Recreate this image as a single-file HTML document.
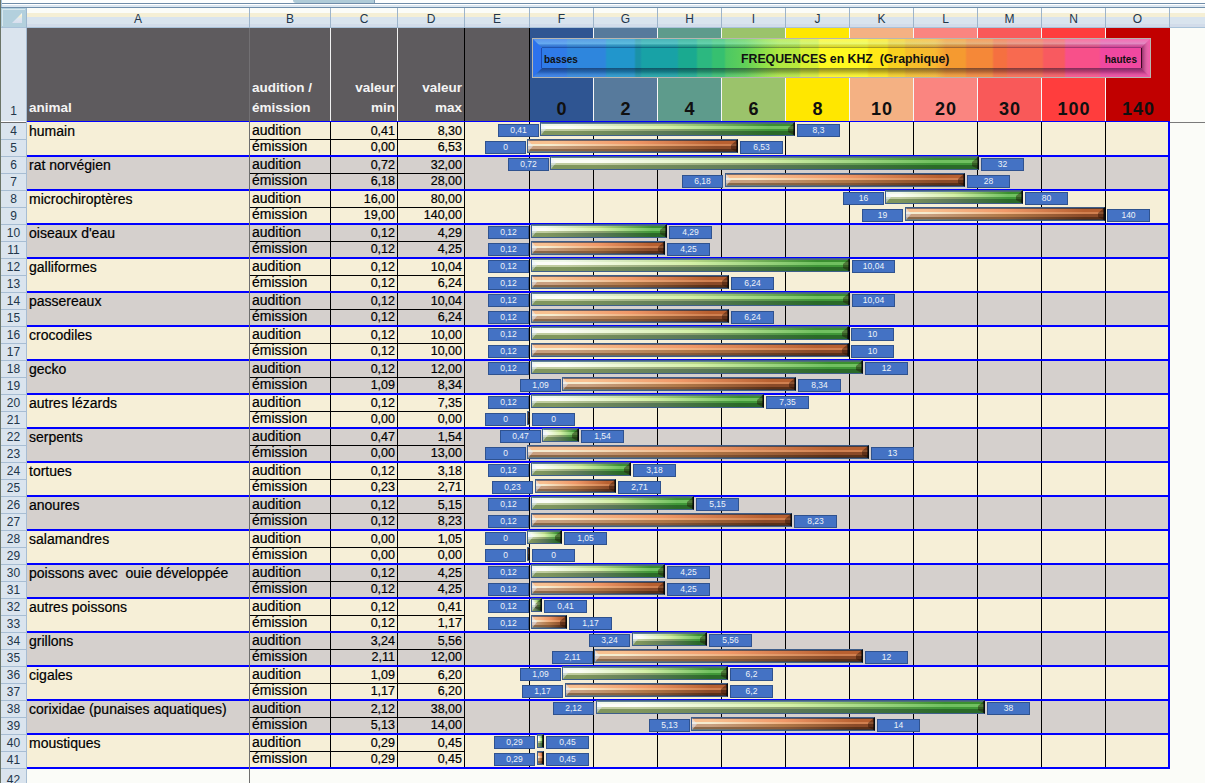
<!DOCTYPE html>
<html><head><meta charset="utf-8"><style>
html,body{margin:0;padding:0}
body{width:1205px;height:783px;overflow:hidden;position:relative;background:#fbfcf8;font-family:"Liberation Sans",sans-serif}
div{position:absolute;box-sizing:border-box}
.ch{font-size:12px;color:#22364a;text-align:center;line-height:19px;padding-top:2px}
.rh{font-size:12px;color:#22364a;text-align:center;line-height:16px}
.fn{font-size:18px;font-weight:bold;color:#101010;text-align:center;line-height:22px;letter-spacing:1px;text-indent:1px}
.hd{font-size:13.5px;font-weight:bold;color:#f4f4f4;line-height:18px;white-space:nowrap}
.bn{font-size:10px;font-weight:bold;color:#101010;line-height:14px;white-space:nowrap}
.tx{font-size:14px;color:#000;-webkit-text-stroke:0.2px #000;line-height:17px;white-space:nowrap}
.nm{font-size:12.5px;color:#000;-webkit-text-stroke:0.2px #000;line-height:17px;white-space:nowrap;text-align:right}
.lb{background:#4472c4;border:1px solid #2f528f;color:#eef2f8;font-size:8.5px;text-align:center;line-height:11px}
.bar{border:1px solid #3e5e8a;border-right-color:#050a10;overflow:hidden}
.au{background:linear-gradient(180deg,rgba(255,255,255,.55) 0%,rgba(255,255,255,.25) 35%,rgba(0,0,0,0) 55%,rgba(0,0,0,.25) 100%),linear-gradient(90deg,#f6f8ee 0%,#b8d8a0 45%,#3f9a3f 85%,#2a7a2a 100%)}
.em{background:linear-gradient(180deg,rgba(255,255,255,.35) 0%,rgba(255,255,255,.3) 40%,rgba(0,0,0,0) 55%,rgba(0,0,0,.35) 100%),linear-gradient(90deg,#f3d8b8 0%,#e0a070 50%,#c06a3a 85%,#8a4520 100%)}
</style></head><body>
<div style="left:0px;top:0px;width:1205px;height:3px;background:#fdfefe"></div>
<div style="left:293px;top:0px;width:82px;height:3px;background:#afcbd8;border-right:1px solid #7f9cb5;border-radius:0 0 0 4px"></div>
<div style="left:0px;top:3px;width:1205px;height:1px;background:#6f8ca8"></div>
<div style="left:0px;top:4px;width:1205px;height:1px;background:#ffffff"></div>
<div style="left:0px;top:5px;width:1205px;height:2px;background:#dbe6f0"></div>
<div style="left:0px;top:7px;width:1205px;height:1px;background:#6f8eab"></div>
<div style="left:1px;top:0px;width:1px;height:7px;background:#a8c4dc"></div>
<div style="left:1px;top:8px;width:1204px;height:5px;background:#fbfcf8"></div>
<div style="left:1px;top:13px;width:1204px;height:4px;background:#f5efd5"></div>
<div style="left:1px;top:17px;width:1204px;height:7px;background:#d9e4ee"></div>
<div style="left:1px;top:24px;width:1204px;height:3px;background:#d2dcea"></div>
<div style="left:1px;top:27px;width:1204px;height:1px;background:#a9c2d9"></div>
<div style="left:1px;top:8px;width:25px;height:19px;background:#b3d0dd"></div>
<svg style="position:absolute;left:12px;top:13px" width="11" height="11"><defs><linearGradient id="tri" x1="0" y1="0" x2="0" y2="1"><stop offset="0" stop-color="#ffffff"/><stop offset="0.3" stop-color="#f5efd0"/><stop offset="0.55" stop-color="#dfe8f0"/><stop offset="1" stop-color="#d8deee"/></linearGradient></defs><polygon points="10,0 10,10 0,10" fill="url(#tri)"/></svg>
<div style="left:2px;top:9px;width:23px;height:1px;background:#d8e8ef"></div>
<div style="left:2px;top:9px;width:1px;height:17px;background:#d8e8ef"></div>
<div style="left:26px;top:8px;width:1px;height:20px;background:#9db8cf"></div>
<div style="left:249px;top:8px;width:1px;height:20px;background:#9db4ca"></div>
<div class="ch" style="left:27px;top:8px;width:222px;height:19px;">A</div>
<div style="left:330px;top:8px;width:1px;height:20px;background:#9db4ca"></div>
<div class="ch" style="left:250px;top:8px;width:80px;height:19px;">B</div>
<div style="left:397px;top:8px;width:1px;height:20px;background:#9db4ca"></div>
<div class="ch" style="left:331px;top:8px;width:66px;height:19px;">C</div>
<div style="left:464px;top:8px;width:1px;height:20px;background:#9db4ca"></div>
<div class="ch" style="left:398px;top:8px;width:66px;height:19px;">D</div>
<div style="left:529px;top:8px;width:1px;height:20px;background:#9db4ca"></div>
<div class="ch" style="left:465px;top:8px;width:64px;height:19px;">E</div>
<div style="left:593px;top:8px;width:1px;height:20px;background:#9db4ca"></div>
<div class="ch" style="left:530px;top:8px;width:63px;height:19px;">F</div>
<div style="left:657px;top:8px;width:1px;height:20px;background:#9db4ca"></div>
<div class="ch" style="left:594px;top:8px;width:63px;height:19px;">G</div>
<div style="left:721px;top:8px;width:1px;height:20px;background:#9db4ca"></div>
<div class="ch" style="left:658px;top:8px;width:63px;height:19px;">H</div>
<div style="left:785px;top:8px;width:1px;height:20px;background:#9db4ca"></div>
<div class="ch" style="left:722px;top:8px;width:63px;height:19px;">I</div>
<div style="left:849px;top:8px;width:1px;height:20px;background:#9db4ca"></div>
<div class="ch" style="left:786px;top:8px;width:63px;height:19px;">J</div>
<div style="left:913px;top:8px;width:1px;height:20px;background:#9db4ca"></div>
<div class="ch" style="left:850px;top:8px;width:63px;height:19px;">K</div>
<div style="left:977px;top:8px;width:1px;height:20px;background:#9db4ca"></div>
<div class="ch" style="left:914px;top:8px;width:63px;height:19px;">L</div>
<div style="left:1041px;top:8px;width:1px;height:20px;background:#9db4ca"></div>
<div class="ch" style="left:978px;top:8px;width:63px;height:19px;">M</div>
<div style="left:1105px;top:8px;width:1px;height:20px;background:#9db4ca"></div>
<div class="ch" style="left:1042px;top:8px;width:63px;height:19px;">N</div>
<div style="left:1169px;top:8px;width:1px;height:20px;background:#9db4ca"></div>
<div class="ch" style="left:1106px;top:8px;width:63px;height:19px;">O</div>
<div style="left:1170px;top:8px;width:35px;height:19px;"></div>
<div style="left:0px;top:0px;width:1px;height:783px;background:#6b7568"></div>
<div style="left:1px;top:28px;width:25px;height:755px;background:#dae4ee"></div>
<div style="left:26px;top:28px;width:1px;height:755px;background:#a7bdd3"></div>
<div class="rh" style="left:1px;top:103px;width:25px;height:16px;">1</div>
<div style="left:1px;top:121px;width:25px;height:1px;background:#ffffff"></div>
<div style="left:1px;top:122px;width:25px;height:1px;background:#6c6c6c"></div>
<div class="rh" style="left:1px;top:123px;width:25px;height:16px;">4</div>
<div style="left:1px;top:139px;width:25px;height:1px;background:#a7bdd3"></div>
<div class="rh" style="left:1px;top:140px;width:25px;height:16px;">5</div>
<div style="left:1px;top:156px;width:25px;height:1px;background:#a7bdd3"></div>
<div class="rh" style="left:1px;top:157px;width:25px;height:16px;">6</div>
<div style="left:1px;top:173px;width:25px;height:1px;background:#a7bdd3"></div>
<div class="rh" style="left:1px;top:174px;width:25px;height:16px;">7</div>
<div style="left:1px;top:190px;width:25px;height:1px;background:#a7bdd3"></div>
<div class="rh" style="left:1px;top:191px;width:25px;height:16px;">8</div>
<div style="left:1px;top:207px;width:25px;height:1px;background:#a7bdd3"></div>
<div class="rh" style="left:1px;top:208px;width:25px;height:16px;">9</div>
<div style="left:1px;top:224px;width:25px;height:1px;background:#a7bdd3"></div>
<div class="rh" style="left:1px;top:225px;width:25px;height:16px;">10</div>
<div style="left:1px;top:241px;width:25px;height:1px;background:#a7bdd3"></div>
<div class="rh" style="left:1px;top:242px;width:25px;height:16px;">11</div>
<div style="left:1px;top:258px;width:25px;height:1px;background:#a7bdd3"></div>
<div class="rh" style="left:1px;top:259px;width:25px;height:16px;">12</div>
<div style="left:1px;top:275px;width:25px;height:1px;background:#a7bdd3"></div>
<div class="rh" style="left:1px;top:276px;width:25px;height:16px;">13</div>
<div style="left:1px;top:292px;width:25px;height:1px;background:#a7bdd3"></div>
<div class="rh" style="left:1px;top:293px;width:25px;height:16px;">14</div>
<div style="left:1px;top:309px;width:25px;height:1px;background:#a7bdd3"></div>
<div class="rh" style="left:1px;top:310px;width:25px;height:16px;">15</div>
<div style="left:1px;top:326px;width:25px;height:1px;background:#a7bdd3"></div>
<div class="rh" style="left:1px;top:327px;width:25px;height:16px;">16</div>
<div style="left:1px;top:343px;width:25px;height:1px;background:#a7bdd3"></div>
<div class="rh" style="left:1px;top:344px;width:25px;height:16px;">17</div>
<div style="left:1px;top:360px;width:25px;height:1px;background:#a7bdd3"></div>
<div class="rh" style="left:1px;top:361px;width:25px;height:16px;">18</div>
<div style="left:1px;top:377px;width:25px;height:1px;background:#a7bdd3"></div>
<div class="rh" style="left:1px;top:378px;width:25px;height:16px;">19</div>
<div style="left:1px;top:394px;width:25px;height:1px;background:#a7bdd3"></div>
<div class="rh" style="left:1px;top:395px;width:25px;height:16px;">20</div>
<div style="left:1px;top:411px;width:25px;height:1px;background:#a7bdd3"></div>
<div class="rh" style="left:1px;top:412px;width:25px;height:16px;">21</div>
<div style="left:1px;top:428px;width:25px;height:1px;background:#a7bdd3"></div>
<div class="rh" style="left:1px;top:429px;width:25px;height:16px;">22</div>
<div style="left:1px;top:445px;width:25px;height:1px;background:#a7bdd3"></div>
<div class="rh" style="left:1px;top:446px;width:25px;height:16px;">23</div>
<div style="left:1px;top:462px;width:25px;height:1px;background:#a7bdd3"></div>
<div class="rh" style="left:1px;top:463px;width:25px;height:16px;">24</div>
<div style="left:1px;top:479px;width:25px;height:1px;background:#a7bdd3"></div>
<div class="rh" style="left:1px;top:480px;width:25px;height:16px;">25</div>
<div style="left:1px;top:496px;width:25px;height:1px;background:#a7bdd3"></div>
<div class="rh" style="left:1px;top:497px;width:25px;height:16px;">26</div>
<div style="left:1px;top:513px;width:25px;height:1px;background:#a7bdd3"></div>
<div class="rh" style="left:1px;top:514px;width:25px;height:16px;">27</div>
<div style="left:1px;top:530px;width:25px;height:1px;background:#a7bdd3"></div>
<div class="rh" style="left:1px;top:531px;width:25px;height:16px;">28</div>
<div style="left:1px;top:547px;width:25px;height:1px;background:#a7bdd3"></div>
<div class="rh" style="left:1px;top:548px;width:25px;height:16px;">29</div>
<div style="left:1px;top:564px;width:25px;height:1px;background:#a7bdd3"></div>
<div class="rh" style="left:1px;top:565px;width:25px;height:16px;">30</div>
<div style="left:1px;top:581px;width:25px;height:1px;background:#a7bdd3"></div>
<div class="rh" style="left:1px;top:582px;width:25px;height:16px;">31</div>
<div style="left:1px;top:598px;width:25px;height:1px;background:#a7bdd3"></div>
<div class="rh" style="left:1px;top:599px;width:25px;height:16px;">32</div>
<div style="left:1px;top:615px;width:25px;height:1px;background:#a7bdd3"></div>
<div class="rh" style="left:1px;top:616px;width:25px;height:16px;">33</div>
<div style="left:1px;top:632px;width:25px;height:1px;background:#a7bdd3"></div>
<div class="rh" style="left:1px;top:633px;width:25px;height:16px;">34</div>
<div style="left:1px;top:649px;width:25px;height:1px;background:#a7bdd3"></div>
<div class="rh" style="left:1px;top:650px;width:25px;height:16px;">35</div>
<div style="left:1px;top:666px;width:25px;height:1px;background:#a7bdd3"></div>
<div class="rh" style="left:1px;top:667px;width:25px;height:16px;">36</div>
<div style="left:1px;top:683px;width:25px;height:1px;background:#a7bdd3"></div>
<div class="rh" style="left:1px;top:684px;width:25px;height:16px;">37</div>
<div style="left:1px;top:700px;width:25px;height:1px;background:#a7bdd3"></div>
<div class="rh" style="left:1px;top:701px;width:25px;height:16px;">38</div>
<div style="left:1px;top:717px;width:25px;height:1px;background:#a7bdd3"></div>
<div class="rh" style="left:1px;top:718px;width:25px;height:16px;">39</div>
<div style="left:1px;top:734px;width:25px;height:1px;background:#a7bdd3"></div>
<div class="rh" style="left:1px;top:735px;width:25px;height:16px;">40</div>
<div style="left:1px;top:751px;width:25px;height:1px;background:#a7bdd3"></div>
<div class="rh" style="left:1px;top:752px;width:25px;height:16px;">41</div>
<div style="left:1px;top:768px;width:25px;height:1px;background:#a7bdd3"></div>
<div class="rh" style="left:1px;top:772px;width:25px;height:16px;">42</div>
<div style="left:27px;top:28px;width:503px;height:93px;background:#5e5b5e"></div>
<div style="left:530px;top:28px;width:63px;height:93px;background:#2f5592"></div>
<div class="fn" style="left:530px;top:98px;width:63px;height:22px;">0</div>
<div style="left:594px;top:28px;width:63px;height:93px;background:#577a9c"></div>
<div class="fn" style="left:594px;top:98px;width:63px;height:22px;">2</div>
<div style="left:658px;top:28px;width:63px;height:93px;background:#5e9b8c"></div>
<div class="fn" style="left:658px;top:98px;width:63px;height:22px;">4</div>
<div style="left:722px;top:28px;width:63px;height:93px;background:#9bc36b"></div>
<div class="fn" style="left:722px;top:98px;width:63px;height:22px;">6</div>
<div style="left:786px;top:28px;width:63px;height:93px;background:#ffe700"></div>
<div class="fn" style="left:786px;top:98px;width:63px;height:22px;">8</div>
<div style="left:850px;top:28px;width:63px;height:93px;background:#f4b183"></div>
<div class="fn" style="left:850px;top:98px;width:63px;height:22px;">10</div>
<div style="left:914px;top:28px;width:63px;height:93px;background:#fa8580"></div>
<div class="fn" style="left:914px;top:98px;width:63px;height:22px;">20</div>
<div style="left:978px;top:28px;width:63px;height:93px;background:#f95959"></div>
<div class="fn" style="left:978px;top:98px;width:63px;height:22px;">30</div>
<div style="left:1042px;top:28px;width:63px;height:93px;background:#ff3d3d"></div>
<div class="fn" style="left:1042px;top:98px;width:63px;height:22px;">100</div>
<div style="left:1106px;top:28px;width:64px;height:93px;background:#c10000"></div>
<div class="fn" style="left:1106px;top:98px;width:64px;height:22px;">140</div>
<div style="left:249px;top:28px;width:1px;height:93px;background:#727073"></div>
<div style="left:330px;top:28px;width:1px;height:93px;background:#f2f2f2"></div>
<div style="left:397px;top:28px;width:1px;height:93px;background:#f2f2f2"></div>
<div style="left:464px;top:28px;width:1px;height:93px;background:#000"></div>
<div style="left:529px;top:28px;width:1px;height:93px;background:#000"></div>
<div style="left:593px;top:28px;width:1px;height:93px;background:#f6f6f6"></div>
<div style="left:657px;top:28px;width:1px;height:93px;background:#f6f6f6"></div>
<div style="left:721px;top:28px;width:1px;height:93px;background:#f6f6f6"></div>
<div style="left:785px;top:28px;width:1px;height:93px;background:#f6f6f6"></div>
<div style="left:849px;top:28px;width:1px;height:93px;background:#f6f6f6"></div>
<div style="left:913px;top:28px;width:1px;height:93px;background:#f6f6f6"></div>
<div style="left:977px;top:28px;width:1px;height:93px;background:#f6f6f6"></div>
<div style="left:1041px;top:28px;width:1px;height:93px;background:#f6f6f6"></div>
<div style="left:1105px;top:28px;width:1px;height:93px;background:#f6f6f6"></div>
<div class="hd" style="left:29px;top:99px;width:200px;height:18px;">animal</div>
<div class="hd" style="left:252px;top:79px;width:80px;height:18px;">audition /</div>
<div class="hd" style="left:252px;top:99px;width:80px;height:18px;">émission</div>
<div class="hd" style="left:331px;top:79px;width:64px;height:18px;text-align:right">valeur</div>
<div class="hd" style="left:331px;top:99px;width:64px;height:18px;text-align:right">min</div>
<div class="hd" style="left:398px;top:79px;width:64px;height:18px;text-align:right">valeur</div>
<div class="hd" style="left:398px;top:99px;width:64px;height:18px;text-align:right">max</div>
<div style="left:532px;top:38px;width:619px;height:40px;background:#b8b6b0"></div>
<div style="left:533px;top:39px;width:617px;height:38px;background:linear-gradient(90deg,#2f7be8 9px,#2f7be8 33px,#2e86dd 35px,#2e86dd 72px,#2196cc 74px,#2196cc 101px,#1a92a8 103px,#1a92a8 107px,#18a2a6 109px,#18a2a6 144px,#1aaa90 146px,#1aaa90 163px,#2cb880 165px,#2cb880 178px,#36c070 180px,#36c070 191px,#4cc864 193px,#60d058 212px,#90e048 232px,#b0e840 247px,#b8ea3c 266px,#d8f030 268px,#d8f030 285px,#fff820 287px,#fff820 334px,#ffe818 336px,#ffe818 354px,#f8d020 356px,#f8d020 371px,#f5c028 373px,#f8b830 402px,#f5a030 411px,#f59a30 413px,#f59a30 432px,#f58838 434px,#f58838 459px,#f57040 461px,#f57040 473px,#f86a50 475px,#f86a50 509px,#f85a60 511px,#f85a60 531px,#f8508a 533px,#f8508a 566px,#f048a0 568px,#f048a0 607px)"></div>
<svg style="position:absolute;left:533px;top:39px" width="617" height="38"><defs><linearGradient id="gb" x1="0" y1="0" x2="0" y2="1"><stop offset="0" stop-color="rgb(10,10,40)" stop-opacity="0.50"/><stop offset="0.45" stop-color="rgb(10,10,40)" stop-opacity="0.25"/><stop offset="1" stop-color="rgb(255,255,255)" stop-opacity="0.08"/></linearGradient><linearGradient id="gr" x1="0" y1="0" x2="1" y2="0"><stop offset="0" stop-color="rgb(40,0,30)" stop-opacity="0.55"/><stop offset="1" stop-color="rgb(255,255,255)" stop-opacity="0.10"/></linearGradient><linearGradient id="gt" x1="0" y1="0" x2="0" y2="1"><stop offset="0" stop-color="rgb(255,255,255)" stop-opacity="0.20"/><stop offset="0.5" stop-color="rgb(200,255,255)" stop-opacity="0.35"/><stop offset="1" stop-color="rgb(0,0,40)" stop-opacity="0.10"/></linearGradient></defs><polygon points="0,0 617,0 608,9 9,9" fill="url(#gt)"/><polygon points="9,29 608,29 617,38 0,38" fill="url(#gb)"/><polygon points="0,0 9,9 9,29 0,38" fill="rgba(40,80,255,0.22)"/><polygon points="617,0 608,9 608,29 617,38" fill="url(#gr)"/><line x1="8.5" y1="9" x2="8.5" y2="29" stroke="rgba(0,0,60,0.35)" stroke-width="1"/><line x1="9" y1="8.5" x2="608" y2="8.5" stroke="rgba(0,0,60,0.25)" stroke-width="1"/><line x1="608.5" y1="9" x2="608.5" y2="29" stroke="rgba(40,0,20,0.8)" stroke-width="1"/></svg>
<div class="bn" style="left:544px;top:53px;width:60px;height:14px;">basses</div>
<div class="bn" style="left:741px;top:52px;width:260px;height:16px;font-weight:bold;font-size:12.3px">FREQUENCES en KHZ&nbsp; (Graphique)</div>
<div class="bn" style="left:1058px;top:53px;width:79px;height:14px;text-align:right">hautes</div>
<div style="left:27px;top:122px;width:1142px;height:33px;background:#f6efd7"></div>
<div style="left:330px;top:122px;width:1px;height:33px;background:#000"></div>
<div style="left:397px;top:122px;width:1px;height:33px;background:#000"></div>
<div style="left:464px;top:122px;width:1px;height:33px;background:#000"></div>
<div style="left:529px;top:122px;width:1px;height:33px;background:#000"></div>
<div style="left:593px;top:122px;width:1px;height:33px;background:#000"></div>
<div style="left:657px;top:122px;width:1px;height:33px;background:#000"></div>
<div style="left:721px;top:122px;width:1px;height:33px;background:#000"></div>
<div style="left:785px;top:122px;width:1px;height:33px;background:#000"></div>
<div style="left:849px;top:122px;width:1px;height:33px;background:#000"></div>
<div style="left:913px;top:122px;width:1px;height:33px;background:#000"></div>
<div style="left:977px;top:122px;width:1px;height:33px;background:#000"></div>
<div style="left:1041px;top:122px;width:1px;height:33px;background:#000"></div>
<div style="left:1105px;top:122px;width:1px;height:33px;background:#000"></div>
<div style="left:250px;top:139px;width:215px;height:1px;background:#000"></div>
<div class="tx" style="left:29px;top:123px;width:218px;height:17px;">humain</div>
<div class="tx" style="left:252px;top:122px;width:78px;height:17px;">audition</div>
<div class="tx" style="left:252px;top:138px;width:78px;height:17px;">émission</div>
<div class="nm" style="left:331px;top:123px;width:64px;height:17px;">0,41</div>
<div class="nm" style="left:331px;top:139px;width:64px;height:17px;">0,00</div>
<div class="nm" style="left:398px;top:123px;width:64px;height:17px;">8,30</div>
<div class="nm" style="left:398px;top:139px;width:64px;height:17px;">6,53</div>
<div style="left:27px;top:157px;width:1142px;height:32px;background:#d5d0cd"></div>
<div style="left:330px;top:157px;width:1px;height:32px;background:#000"></div>
<div style="left:397px;top:157px;width:1px;height:32px;background:#000"></div>
<div style="left:464px;top:157px;width:1px;height:32px;background:#000"></div>
<div style="left:529px;top:157px;width:1px;height:32px;background:#000"></div>
<div style="left:593px;top:157px;width:1px;height:32px;background:#000"></div>
<div style="left:657px;top:157px;width:1px;height:32px;background:#000"></div>
<div style="left:721px;top:157px;width:1px;height:32px;background:#000"></div>
<div style="left:785px;top:157px;width:1px;height:32px;background:#000"></div>
<div style="left:849px;top:157px;width:1px;height:32px;background:#000"></div>
<div style="left:913px;top:157px;width:1px;height:32px;background:#000"></div>
<div style="left:977px;top:157px;width:1px;height:32px;background:#000"></div>
<div style="left:1041px;top:157px;width:1px;height:32px;background:#000"></div>
<div style="left:1105px;top:157px;width:1px;height:32px;background:#000"></div>
<div style="left:250px;top:173px;width:215px;height:1px;background:#000"></div>
<div class="tx" style="left:29px;top:157px;width:218px;height:17px;">rat norvégien</div>
<div class="tx" style="left:252px;top:156px;width:78px;height:17px;">audition</div>
<div class="tx" style="left:252px;top:172px;width:78px;height:17px;">émission</div>
<div class="nm" style="left:331px;top:157px;width:64px;height:17px;">0,72</div>
<div class="nm" style="left:331px;top:173px;width:64px;height:17px;">6,18</div>
<div class="nm" style="left:398px;top:157px;width:64px;height:17px;">32,00</div>
<div class="nm" style="left:398px;top:173px;width:64px;height:17px;">28,00</div>
<div style="left:27px;top:191px;width:1142px;height:32px;background:#f6efd7"></div>
<div style="left:330px;top:191px;width:1px;height:32px;background:#000"></div>
<div style="left:397px;top:191px;width:1px;height:32px;background:#000"></div>
<div style="left:464px;top:191px;width:1px;height:32px;background:#000"></div>
<div style="left:529px;top:191px;width:1px;height:32px;background:#000"></div>
<div style="left:593px;top:191px;width:1px;height:32px;background:#000"></div>
<div style="left:657px;top:191px;width:1px;height:32px;background:#000"></div>
<div style="left:721px;top:191px;width:1px;height:32px;background:#000"></div>
<div style="left:785px;top:191px;width:1px;height:32px;background:#000"></div>
<div style="left:849px;top:191px;width:1px;height:32px;background:#000"></div>
<div style="left:913px;top:191px;width:1px;height:32px;background:#000"></div>
<div style="left:977px;top:191px;width:1px;height:32px;background:#000"></div>
<div style="left:1041px;top:191px;width:1px;height:32px;background:#000"></div>
<div style="left:1105px;top:191px;width:1px;height:32px;background:#000"></div>
<div style="left:250px;top:207px;width:215px;height:1px;background:#000"></div>
<div class="tx" style="left:29px;top:191px;width:218px;height:17px;">microchiroptères</div>
<div class="tx" style="left:252px;top:190px;width:78px;height:17px;">audition</div>
<div class="tx" style="left:252px;top:206px;width:78px;height:17px;">émission</div>
<div class="nm" style="left:331px;top:191px;width:64px;height:17px;">16,00</div>
<div class="nm" style="left:331px;top:207px;width:64px;height:17px;">19,00</div>
<div class="nm" style="left:398px;top:191px;width:64px;height:17px;">80,00</div>
<div class="nm" style="left:398px;top:207px;width:64px;height:17px;">140,00</div>
<div style="left:27px;top:225px;width:1142px;height:32px;background:#d5d0cd"></div>
<div style="left:330px;top:225px;width:1px;height:32px;background:#000"></div>
<div style="left:397px;top:225px;width:1px;height:32px;background:#000"></div>
<div style="left:464px;top:225px;width:1px;height:32px;background:#000"></div>
<div style="left:529px;top:225px;width:1px;height:32px;background:#000"></div>
<div style="left:593px;top:225px;width:1px;height:32px;background:#000"></div>
<div style="left:657px;top:225px;width:1px;height:32px;background:#000"></div>
<div style="left:721px;top:225px;width:1px;height:32px;background:#000"></div>
<div style="left:785px;top:225px;width:1px;height:32px;background:#000"></div>
<div style="left:849px;top:225px;width:1px;height:32px;background:#000"></div>
<div style="left:913px;top:225px;width:1px;height:32px;background:#000"></div>
<div style="left:977px;top:225px;width:1px;height:32px;background:#000"></div>
<div style="left:1041px;top:225px;width:1px;height:32px;background:#000"></div>
<div style="left:1105px;top:225px;width:1px;height:32px;background:#000"></div>
<div style="left:250px;top:241px;width:215px;height:1px;background:#000"></div>
<div class="tx" style="left:29px;top:225px;width:218px;height:17px;">oiseaux d'eau</div>
<div class="tx" style="left:252px;top:224px;width:78px;height:17px;">audition</div>
<div class="tx" style="left:252px;top:240px;width:78px;height:17px;">émission</div>
<div class="nm" style="left:331px;top:225px;width:64px;height:17px;">0,12</div>
<div class="nm" style="left:331px;top:241px;width:64px;height:17px;">0,12</div>
<div class="nm" style="left:398px;top:225px;width:64px;height:17px;">4,29</div>
<div class="nm" style="left:398px;top:241px;width:64px;height:17px;">4,25</div>
<div style="left:27px;top:259px;width:1142px;height:32px;background:#f6efd7"></div>
<div style="left:330px;top:259px;width:1px;height:32px;background:#000"></div>
<div style="left:397px;top:259px;width:1px;height:32px;background:#000"></div>
<div style="left:464px;top:259px;width:1px;height:32px;background:#000"></div>
<div style="left:529px;top:259px;width:1px;height:32px;background:#000"></div>
<div style="left:593px;top:259px;width:1px;height:32px;background:#000"></div>
<div style="left:657px;top:259px;width:1px;height:32px;background:#000"></div>
<div style="left:721px;top:259px;width:1px;height:32px;background:#000"></div>
<div style="left:785px;top:259px;width:1px;height:32px;background:#000"></div>
<div style="left:849px;top:259px;width:1px;height:32px;background:#000"></div>
<div style="left:913px;top:259px;width:1px;height:32px;background:#000"></div>
<div style="left:977px;top:259px;width:1px;height:32px;background:#000"></div>
<div style="left:1041px;top:259px;width:1px;height:32px;background:#000"></div>
<div style="left:1105px;top:259px;width:1px;height:32px;background:#000"></div>
<div style="left:250px;top:275px;width:215px;height:1px;background:#000"></div>
<div class="tx" style="left:29px;top:259px;width:218px;height:17px;">galliformes</div>
<div class="tx" style="left:252px;top:258px;width:78px;height:17px;">audition</div>
<div class="tx" style="left:252px;top:274px;width:78px;height:17px;">émission</div>
<div class="nm" style="left:331px;top:259px;width:64px;height:17px;">0,12</div>
<div class="nm" style="left:331px;top:275px;width:64px;height:17px;">0,12</div>
<div class="nm" style="left:398px;top:259px;width:64px;height:17px;">10,04</div>
<div class="nm" style="left:398px;top:275px;width:64px;height:17px;">6,24</div>
<div style="left:27px;top:293px;width:1142px;height:32px;background:#d5d0cd"></div>
<div style="left:330px;top:293px;width:1px;height:32px;background:#000"></div>
<div style="left:397px;top:293px;width:1px;height:32px;background:#000"></div>
<div style="left:464px;top:293px;width:1px;height:32px;background:#000"></div>
<div style="left:529px;top:293px;width:1px;height:32px;background:#000"></div>
<div style="left:593px;top:293px;width:1px;height:32px;background:#000"></div>
<div style="left:657px;top:293px;width:1px;height:32px;background:#000"></div>
<div style="left:721px;top:293px;width:1px;height:32px;background:#000"></div>
<div style="left:785px;top:293px;width:1px;height:32px;background:#000"></div>
<div style="left:849px;top:293px;width:1px;height:32px;background:#000"></div>
<div style="left:913px;top:293px;width:1px;height:32px;background:#000"></div>
<div style="left:977px;top:293px;width:1px;height:32px;background:#000"></div>
<div style="left:1041px;top:293px;width:1px;height:32px;background:#000"></div>
<div style="left:1105px;top:293px;width:1px;height:32px;background:#000"></div>
<div style="left:250px;top:309px;width:215px;height:1px;background:#000"></div>
<div class="tx" style="left:29px;top:293px;width:218px;height:17px;">passereaux</div>
<div class="tx" style="left:252px;top:292px;width:78px;height:17px;">audition</div>
<div class="tx" style="left:252px;top:308px;width:78px;height:17px;">émission</div>
<div class="nm" style="left:331px;top:293px;width:64px;height:17px;">0,12</div>
<div class="nm" style="left:331px;top:309px;width:64px;height:17px;">0,12</div>
<div class="nm" style="left:398px;top:293px;width:64px;height:17px;">10,04</div>
<div class="nm" style="left:398px;top:309px;width:64px;height:17px;">6,24</div>
<div style="left:27px;top:327px;width:1142px;height:32px;background:#f6efd7"></div>
<div style="left:330px;top:327px;width:1px;height:32px;background:#000"></div>
<div style="left:397px;top:327px;width:1px;height:32px;background:#000"></div>
<div style="left:464px;top:327px;width:1px;height:32px;background:#000"></div>
<div style="left:529px;top:327px;width:1px;height:32px;background:#000"></div>
<div style="left:593px;top:327px;width:1px;height:32px;background:#000"></div>
<div style="left:657px;top:327px;width:1px;height:32px;background:#000"></div>
<div style="left:721px;top:327px;width:1px;height:32px;background:#000"></div>
<div style="left:785px;top:327px;width:1px;height:32px;background:#000"></div>
<div style="left:849px;top:327px;width:1px;height:32px;background:#000"></div>
<div style="left:913px;top:327px;width:1px;height:32px;background:#000"></div>
<div style="left:977px;top:327px;width:1px;height:32px;background:#000"></div>
<div style="left:1041px;top:327px;width:1px;height:32px;background:#000"></div>
<div style="left:1105px;top:327px;width:1px;height:32px;background:#000"></div>
<div style="left:250px;top:343px;width:215px;height:1px;background:#000"></div>
<div class="tx" style="left:29px;top:327px;width:218px;height:17px;">crocodiles</div>
<div class="tx" style="left:252px;top:326px;width:78px;height:17px;">audition</div>
<div class="tx" style="left:252px;top:342px;width:78px;height:17px;">émission</div>
<div class="nm" style="left:331px;top:327px;width:64px;height:17px;">0,12</div>
<div class="nm" style="left:331px;top:343px;width:64px;height:17px;">0,12</div>
<div class="nm" style="left:398px;top:327px;width:64px;height:17px;">10,00</div>
<div class="nm" style="left:398px;top:343px;width:64px;height:17px;">10,00</div>
<div style="left:27px;top:361px;width:1142px;height:32px;background:#d5d0cd"></div>
<div style="left:330px;top:361px;width:1px;height:32px;background:#000"></div>
<div style="left:397px;top:361px;width:1px;height:32px;background:#000"></div>
<div style="left:464px;top:361px;width:1px;height:32px;background:#000"></div>
<div style="left:529px;top:361px;width:1px;height:32px;background:#000"></div>
<div style="left:593px;top:361px;width:1px;height:32px;background:#000"></div>
<div style="left:657px;top:361px;width:1px;height:32px;background:#000"></div>
<div style="left:721px;top:361px;width:1px;height:32px;background:#000"></div>
<div style="left:785px;top:361px;width:1px;height:32px;background:#000"></div>
<div style="left:849px;top:361px;width:1px;height:32px;background:#000"></div>
<div style="left:913px;top:361px;width:1px;height:32px;background:#000"></div>
<div style="left:977px;top:361px;width:1px;height:32px;background:#000"></div>
<div style="left:1041px;top:361px;width:1px;height:32px;background:#000"></div>
<div style="left:1105px;top:361px;width:1px;height:32px;background:#000"></div>
<div style="left:250px;top:377px;width:215px;height:1px;background:#000"></div>
<div class="tx" style="left:29px;top:361px;width:218px;height:17px;">gecko</div>
<div class="tx" style="left:252px;top:360px;width:78px;height:17px;">audition</div>
<div class="tx" style="left:252px;top:376px;width:78px;height:17px;">émission</div>
<div class="nm" style="left:331px;top:361px;width:64px;height:17px;">0,12</div>
<div class="nm" style="left:331px;top:377px;width:64px;height:17px;">1,09</div>
<div class="nm" style="left:398px;top:361px;width:64px;height:17px;">12,00</div>
<div class="nm" style="left:398px;top:377px;width:64px;height:17px;">8,34</div>
<div style="left:27px;top:395px;width:1142px;height:32px;background:#f6efd7"></div>
<div style="left:330px;top:395px;width:1px;height:32px;background:#000"></div>
<div style="left:397px;top:395px;width:1px;height:32px;background:#000"></div>
<div style="left:464px;top:395px;width:1px;height:32px;background:#000"></div>
<div style="left:529px;top:395px;width:1px;height:32px;background:#000"></div>
<div style="left:593px;top:395px;width:1px;height:32px;background:#000"></div>
<div style="left:657px;top:395px;width:1px;height:32px;background:#000"></div>
<div style="left:721px;top:395px;width:1px;height:32px;background:#000"></div>
<div style="left:785px;top:395px;width:1px;height:32px;background:#000"></div>
<div style="left:849px;top:395px;width:1px;height:32px;background:#000"></div>
<div style="left:913px;top:395px;width:1px;height:32px;background:#000"></div>
<div style="left:977px;top:395px;width:1px;height:32px;background:#000"></div>
<div style="left:1041px;top:395px;width:1px;height:32px;background:#000"></div>
<div style="left:1105px;top:395px;width:1px;height:32px;background:#000"></div>
<div style="left:250px;top:411px;width:215px;height:1px;background:#000"></div>
<div class="tx" style="left:29px;top:395px;width:218px;height:17px;">autres lézards</div>
<div class="tx" style="left:252px;top:394px;width:78px;height:17px;">audition</div>
<div class="tx" style="left:252px;top:410px;width:78px;height:17px;">émission</div>
<div class="nm" style="left:331px;top:395px;width:64px;height:17px;">0,12</div>
<div class="nm" style="left:331px;top:411px;width:64px;height:17px;">0,00</div>
<div class="nm" style="left:398px;top:395px;width:64px;height:17px;">7,35</div>
<div class="nm" style="left:398px;top:411px;width:64px;height:17px;">0,00</div>
<div style="left:27px;top:429px;width:1142px;height:32px;background:#d5d0cd"></div>
<div style="left:330px;top:429px;width:1px;height:32px;background:#000"></div>
<div style="left:397px;top:429px;width:1px;height:32px;background:#000"></div>
<div style="left:464px;top:429px;width:1px;height:32px;background:#000"></div>
<div style="left:529px;top:429px;width:1px;height:32px;background:#000"></div>
<div style="left:593px;top:429px;width:1px;height:32px;background:#000"></div>
<div style="left:657px;top:429px;width:1px;height:32px;background:#000"></div>
<div style="left:721px;top:429px;width:1px;height:32px;background:#000"></div>
<div style="left:785px;top:429px;width:1px;height:32px;background:#000"></div>
<div style="left:849px;top:429px;width:1px;height:32px;background:#000"></div>
<div style="left:913px;top:429px;width:1px;height:32px;background:#000"></div>
<div style="left:977px;top:429px;width:1px;height:32px;background:#000"></div>
<div style="left:1041px;top:429px;width:1px;height:32px;background:#000"></div>
<div style="left:1105px;top:429px;width:1px;height:32px;background:#000"></div>
<div style="left:250px;top:445px;width:215px;height:1px;background:#000"></div>
<div class="tx" style="left:29px;top:429px;width:218px;height:17px;">serpents</div>
<div class="tx" style="left:252px;top:428px;width:78px;height:17px;">audition</div>
<div class="tx" style="left:252px;top:444px;width:78px;height:17px;">émission</div>
<div class="nm" style="left:331px;top:429px;width:64px;height:17px;">0,47</div>
<div class="nm" style="left:331px;top:445px;width:64px;height:17px;">0,00</div>
<div class="nm" style="left:398px;top:429px;width:64px;height:17px;">1,54</div>
<div class="nm" style="left:398px;top:445px;width:64px;height:17px;">13,00</div>
<div style="left:27px;top:463px;width:1142px;height:32px;background:#f6efd7"></div>
<div style="left:330px;top:463px;width:1px;height:32px;background:#000"></div>
<div style="left:397px;top:463px;width:1px;height:32px;background:#000"></div>
<div style="left:464px;top:463px;width:1px;height:32px;background:#000"></div>
<div style="left:529px;top:463px;width:1px;height:32px;background:#000"></div>
<div style="left:593px;top:463px;width:1px;height:32px;background:#000"></div>
<div style="left:657px;top:463px;width:1px;height:32px;background:#000"></div>
<div style="left:721px;top:463px;width:1px;height:32px;background:#000"></div>
<div style="left:785px;top:463px;width:1px;height:32px;background:#000"></div>
<div style="left:849px;top:463px;width:1px;height:32px;background:#000"></div>
<div style="left:913px;top:463px;width:1px;height:32px;background:#000"></div>
<div style="left:977px;top:463px;width:1px;height:32px;background:#000"></div>
<div style="left:1041px;top:463px;width:1px;height:32px;background:#000"></div>
<div style="left:1105px;top:463px;width:1px;height:32px;background:#000"></div>
<div style="left:250px;top:479px;width:215px;height:1px;background:#000"></div>
<div class="tx" style="left:29px;top:463px;width:218px;height:17px;">tortues</div>
<div class="tx" style="left:252px;top:462px;width:78px;height:17px;">audition</div>
<div class="tx" style="left:252px;top:478px;width:78px;height:17px;">émission</div>
<div class="nm" style="left:331px;top:463px;width:64px;height:17px;">0,12</div>
<div class="nm" style="left:331px;top:479px;width:64px;height:17px;">0,23</div>
<div class="nm" style="left:398px;top:463px;width:64px;height:17px;">3,18</div>
<div class="nm" style="left:398px;top:479px;width:64px;height:17px;">2,71</div>
<div style="left:27px;top:497px;width:1142px;height:32px;background:#d5d0cd"></div>
<div style="left:330px;top:497px;width:1px;height:32px;background:#000"></div>
<div style="left:397px;top:497px;width:1px;height:32px;background:#000"></div>
<div style="left:464px;top:497px;width:1px;height:32px;background:#000"></div>
<div style="left:529px;top:497px;width:1px;height:32px;background:#000"></div>
<div style="left:593px;top:497px;width:1px;height:32px;background:#000"></div>
<div style="left:657px;top:497px;width:1px;height:32px;background:#000"></div>
<div style="left:721px;top:497px;width:1px;height:32px;background:#000"></div>
<div style="left:785px;top:497px;width:1px;height:32px;background:#000"></div>
<div style="left:849px;top:497px;width:1px;height:32px;background:#000"></div>
<div style="left:913px;top:497px;width:1px;height:32px;background:#000"></div>
<div style="left:977px;top:497px;width:1px;height:32px;background:#000"></div>
<div style="left:1041px;top:497px;width:1px;height:32px;background:#000"></div>
<div style="left:1105px;top:497px;width:1px;height:32px;background:#000"></div>
<div style="left:250px;top:513px;width:215px;height:1px;background:#000"></div>
<div class="tx" style="left:29px;top:497px;width:218px;height:17px;">anoures</div>
<div class="tx" style="left:252px;top:496px;width:78px;height:17px;">audition</div>
<div class="tx" style="left:252px;top:512px;width:78px;height:17px;">émission</div>
<div class="nm" style="left:331px;top:497px;width:64px;height:17px;">0,12</div>
<div class="nm" style="left:331px;top:513px;width:64px;height:17px;">0,12</div>
<div class="nm" style="left:398px;top:497px;width:64px;height:17px;">5,15</div>
<div class="nm" style="left:398px;top:513px;width:64px;height:17px;">8,23</div>
<div style="left:27px;top:531px;width:1142px;height:32px;background:#f6efd7"></div>
<div style="left:330px;top:531px;width:1px;height:32px;background:#000"></div>
<div style="left:397px;top:531px;width:1px;height:32px;background:#000"></div>
<div style="left:464px;top:531px;width:1px;height:32px;background:#000"></div>
<div style="left:529px;top:531px;width:1px;height:32px;background:#000"></div>
<div style="left:593px;top:531px;width:1px;height:32px;background:#000"></div>
<div style="left:657px;top:531px;width:1px;height:32px;background:#000"></div>
<div style="left:721px;top:531px;width:1px;height:32px;background:#000"></div>
<div style="left:785px;top:531px;width:1px;height:32px;background:#000"></div>
<div style="left:849px;top:531px;width:1px;height:32px;background:#000"></div>
<div style="left:913px;top:531px;width:1px;height:32px;background:#000"></div>
<div style="left:977px;top:531px;width:1px;height:32px;background:#000"></div>
<div style="left:1041px;top:531px;width:1px;height:32px;background:#000"></div>
<div style="left:1105px;top:531px;width:1px;height:32px;background:#000"></div>
<div style="left:250px;top:547px;width:215px;height:1px;background:#000"></div>
<div class="tx" style="left:29px;top:531px;width:218px;height:17px;">salamandres</div>
<div class="tx" style="left:252px;top:530px;width:78px;height:17px;">audition</div>
<div class="tx" style="left:252px;top:546px;width:78px;height:17px;">émission</div>
<div class="nm" style="left:331px;top:531px;width:64px;height:17px;">0,00</div>
<div class="nm" style="left:331px;top:547px;width:64px;height:17px;">0,00</div>
<div class="nm" style="left:398px;top:531px;width:64px;height:17px;">1,05</div>
<div class="nm" style="left:398px;top:547px;width:64px;height:17px;">0,00</div>
<div style="left:27px;top:565px;width:1142px;height:32px;background:#d5d0cd"></div>
<div style="left:330px;top:565px;width:1px;height:32px;background:#000"></div>
<div style="left:397px;top:565px;width:1px;height:32px;background:#000"></div>
<div style="left:464px;top:565px;width:1px;height:32px;background:#000"></div>
<div style="left:529px;top:565px;width:1px;height:32px;background:#000"></div>
<div style="left:593px;top:565px;width:1px;height:32px;background:#000"></div>
<div style="left:657px;top:565px;width:1px;height:32px;background:#000"></div>
<div style="left:721px;top:565px;width:1px;height:32px;background:#000"></div>
<div style="left:785px;top:565px;width:1px;height:32px;background:#000"></div>
<div style="left:849px;top:565px;width:1px;height:32px;background:#000"></div>
<div style="left:913px;top:565px;width:1px;height:32px;background:#000"></div>
<div style="left:977px;top:565px;width:1px;height:32px;background:#000"></div>
<div style="left:1041px;top:565px;width:1px;height:32px;background:#000"></div>
<div style="left:1105px;top:565px;width:1px;height:32px;background:#000"></div>
<div style="left:250px;top:581px;width:215px;height:1px;background:#000"></div>
<div class="tx" style="left:29px;top:565px;width:218px;height:17px;">poissons avec&nbsp; ouie développée</div>
<div class="tx" style="left:252px;top:564px;width:78px;height:17px;">audition</div>
<div class="tx" style="left:252px;top:580px;width:78px;height:17px;">émission</div>
<div class="nm" style="left:331px;top:565px;width:64px;height:17px;">0,12</div>
<div class="nm" style="left:331px;top:581px;width:64px;height:17px;">0,12</div>
<div class="nm" style="left:398px;top:565px;width:64px;height:17px;">4,25</div>
<div class="nm" style="left:398px;top:581px;width:64px;height:17px;">4,25</div>
<div style="left:27px;top:599px;width:1142px;height:32px;background:#f6efd7"></div>
<div style="left:330px;top:599px;width:1px;height:32px;background:#000"></div>
<div style="left:397px;top:599px;width:1px;height:32px;background:#000"></div>
<div style="left:464px;top:599px;width:1px;height:32px;background:#000"></div>
<div style="left:529px;top:599px;width:1px;height:32px;background:#000"></div>
<div style="left:593px;top:599px;width:1px;height:32px;background:#000"></div>
<div style="left:657px;top:599px;width:1px;height:32px;background:#000"></div>
<div style="left:721px;top:599px;width:1px;height:32px;background:#000"></div>
<div style="left:785px;top:599px;width:1px;height:32px;background:#000"></div>
<div style="left:849px;top:599px;width:1px;height:32px;background:#000"></div>
<div style="left:913px;top:599px;width:1px;height:32px;background:#000"></div>
<div style="left:977px;top:599px;width:1px;height:32px;background:#000"></div>
<div style="left:1041px;top:599px;width:1px;height:32px;background:#000"></div>
<div style="left:1105px;top:599px;width:1px;height:32px;background:#000"></div>
<div style="left:250px;top:615px;width:215px;height:1px;background:#000"></div>
<div class="tx" style="left:29px;top:599px;width:218px;height:17px;">autres poissons</div>
<div class="tx" style="left:252px;top:598px;width:78px;height:17px;">audition</div>
<div class="tx" style="left:252px;top:614px;width:78px;height:17px;">émission</div>
<div class="nm" style="left:331px;top:599px;width:64px;height:17px;">0,12</div>
<div class="nm" style="left:331px;top:615px;width:64px;height:17px;">0,12</div>
<div class="nm" style="left:398px;top:599px;width:64px;height:17px;">0,41</div>
<div class="nm" style="left:398px;top:615px;width:64px;height:17px;">1,17</div>
<div style="left:27px;top:633px;width:1142px;height:32px;background:#d5d0cd"></div>
<div style="left:330px;top:633px;width:1px;height:32px;background:#000"></div>
<div style="left:397px;top:633px;width:1px;height:32px;background:#000"></div>
<div style="left:464px;top:633px;width:1px;height:32px;background:#000"></div>
<div style="left:529px;top:633px;width:1px;height:32px;background:#000"></div>
<div style="left:593px;top:633px;width:1px;height:32px;background:#000"></div>
<div style="left:657px;top:633px;width:1px;height:32px;background:#000"></div>
<div style="left:721px;top:633px;width:1px;height:32px;background:#000"></div>
<div style="left:785px;top:633px;width:1px;height:32px;background:#000"></div>
<div style="left:849px;top:633px;width:1px;height:32px;background:#000"></div>
<div style="left:913px;top:633px;width:1px;height:32px;background:#000"></div>
<div style="left:977px;top:633px;width:1px;height:32px;background:#000"></div>
<div style="left:1041px;top:633px;width:1px;height:32px;background:#000"></div>
<div style="left:1105px;top:633px;width:1px;height:32px;background:#000"></div>
<div style="left:250px;top:649px;width:215px;height:1px;background:#000"></div>
<div class="tx" style="left:29px;top:633px;width:218px;height:17px;">grillons</div>
<div class="tx" style="left:252px;top:632px;width:78px;height:17px;">audition</div>
<div class="tx" style="left:252px;top:648px;width:78px;height:17px;">émission</div>
<div class="nm" style="left:331px;top:633px;width:64px;height:17px;">3,24</div>
<div class="nm" style="left:331px;top:649px;width:64px;height:17px;">2,11</div>
<div class="nm" style="left:398px;top:633px;width:64px;height:17px;">5,56</div>
<div class="nm" style="left:398px;top:649px;width:64px;height:17px;">12,00</div>
<div style="left:27px;top:667px;width:1142px;height:32px;background:#f6efd7"></div>
<div style="left:330px;top:667px;width:1px;height:32px;background:#000"></div>
<div style="left:397px;top:667px;width:1px;height:32px;background:#000"></div>
<div style="left:464px;top:667px;width:1px;height:32px;background:#000"></div>
<div style="left:529px;top:667px;width:1px;height:32px;background:#000"></div>
<div style="left:593px;top:667px;width:1px;height:32px;background:#000"></div>
<div style="left:657px;top:667px;width:1px;height:32px;background:#000"></div>
<div style="left:721px;top:667px;width:1px;height:32px;background:#000"></div>
<div style="left:785px;top:667px;width:1px;height:32px;background:#000"></div>
<div style="left:849px;top:667px;width:1px;height:32px;background:#000"></div>
<div style="left:913px;top:667px;width:1px;height:32px;background:#000"></div>
<div style="left:977px;top:667px;width:1px;height:32px;background:#000"></div>
<div style="left:1041px;top:667px;width:1px;height:32px;background:#000"></div>
<div style="left:1105px;top:667px;width:1px;height:32px;background:#000"></div>
<div style="left:250px;top:683px;width:215px;height:1px;background:#000"></div>
<div class="tx" style="left:29px;top:667px;width:218px;height:17px;">cigales</div>
<div class="tx" style="left:252px;top:666px;width:78px;height:17px;">audition</div>
<div class="tx" style="left:252px;top:682px;width:78px;height:17px;">émission</div>
<div class="nm" style="left:331px;top:667px;width:64px;height:17px;">1,09</div>
<div class="nm" style="left:331px;top:683px;width:64px;height:17px;">1,17</div>
<div class="nm" style="left:398px;top:667px;width:64px;height:17px;">6,20</div>
<div class="nm" style="left:398px;top:683px;width:64px;height:17px;">6,20</div>
<div style="left:27px;top:701px;width:1142px;height:32px;background:#d5d0cd"></div>
<div style="left:330px;top:701px;width:1px;height:32px;background:#000"></div>
<div style="left:397px;top:701px;width:1px;height:32px;background:#000"></div>
<div style="left:464px;top:701px;width:1px;height:32px;background:#000"></div>
<div style="left:529px;top:701px;width:1px;height:32px;background:#000"></div>
<div style="left:593px;top:701px;width:1px;height:32px;background:#000"></div>
<div style="left:657px;top:701px;width:1px;height:32px;background:#000"></div>
<div style="left:721px;top:701px;width:1px;height:32px;background:#000"></div>
<div style="left:785px;top:701px;width:1px;height:32px;background:#000"></div>
<div style="left:849px;top:701px;width:1px;height:32px;background:#000"></div>
<div style="left:913px;top:701px;width:1px;height:32px;background:#000"></div>
<div style="left:977px;top:701px;width:1px;height:32px;background:#000"></div>
<div style="left:1041px;top:701px;width:1px;height:32px;background:#000"></div>
<div style="left:1105px;top:701px;width:1px;height:32px;background:#000"></div>
<div style="left:250px;top:717px;width:215px;height:1px;background:#000"></div>
<div class="tx" style="left:29px;top:701px;width:218px;height:17px;">corixidae (punaises aquatiques)</div>
<div class="tx" style="left:252px;top:700px;width:78px;height:17px;">audition</div>
<div class="tx" style="left:252px;top:716px;width:78px;height:17px;">émission</div>
<div class="nm" style="left:331px;top:701px;width:64px;height:17px;">2,12</div>
<div class="nm" style="left:331px;top:717px;width:64px;height:17px;">5,13</div>
<div class="nm" style="left:398px;top:701px;width:64px;height:17px;">38,00</div>
<div class="nm" style="left:398px;top:717px;width:64px;height:17px;">14,00</div>
<div style="left:27px;top:735px;width:1142px;height:32px;background:#f6efd7"></div>
<div style="left:330px;top:735px;width:1px;height:32px;background:#000"></div>
<div style="left:397px;top:735px;width:1px;height:32px;background:#000"></div>
<div style="left:464px;top:735px;width:1px;height:32px;background:#000"></div>
<div style="left:529px;top:735px;width:1px;height:32px;background:#000"></div>
<div style="left:593px;top:735px;width:1px;height:32px;background:#000"></div>
<div style="left:657px;top:735px;width:1px;height:32px;background:#000"></div>
<div style="left:721px;top:735px;width:1px;height:32px;background:#000"></div>
<div style="left:785px;top:735px;width:1px;height:32px;background:#000"></div>
<div style="left:849px;top:735px;width:1px;height:32px;background:#000"></div>
<div style="left:913px;top:735px;width:1px;height:32px;background:#000"></div>
<div style="left:977px;top:735px;width:1px;height:32px;background:#000"></div>
<div style="left:1041px;top:735px;width:1px;height:32px;background:#000"></div>
<div style="left:1105px;top:735px;width:1px;height:32px;background:#000"></div>
<div style="left:250px;top:751px;width:215px;height:1px;background:#000"></div>
<div class="tx" style="left:29px;top:735px;width:218px;height:17px;">moustiques</div>
<div class="tx" style="left:252px;top:734px;width:78px;height:17px;">audition</div>
<div class="tx" style="left:252px;top:750px;width:78px;height:17px;">émission</div>
<div class="nm" style="left:331px;top:735px;width:64px;height:17px;">0,29</div>
<div class="nm" style="left:331px;top:751px;width:64px;height:17px;">0,29</div>
<div class="nm" style="left:398px;top:735px;width:64px;height:17px;">0,45</div>
<div class="nm" style="left:398px;top:751px;width:64px;height:17px;">0,45</div>
<div style="left:27px;top:121px;width:1142px;height:1px;background:#0000ff"></div>
<div style="left:27px;top:155px;width:1143px;height:2px;background:#0000ff"></div>
<div style="left:27px;top:189px;width:1143px;height:2px;background:#0000ff"></div>
<div style="left:27px;top:223px;width:1143px;height:2px;background:#0000ff"></div>
<div style="left:27px;top:257px;width:1143px;height:2px;background:#0000ff"></div>
<div style="left:27px;top:291px;width:1143px;height:2px;background:#0000ff"></div>
<div style="left:27px;top:325px;width:1143px;height:2px;background:#0000ff"></div>
<div style="left:27px;top:359px;width:1143px;height:2px;background:#0000ff"></div>
<div style="left:27px;top:393px;width:1143px;height:2px;background:#0000ff"></div>
<div style="left:27px;top:427px;width:1143px;height:2px;background:#0000ff"></div>
<div style="left:27px;top:461px;width:1143px;height:2px;background:#0000ff"></div>
<div style="left:27px;top:495px;width:1143px;height:2px;background:#0000ff"></div>
<div style="left:27px;top:529px;width:1143px;height:2px;background:#0000ff"></div>
<div style="left:27px;top:563px;width:1143px;height:2px;background:#0000ff"></div>
<div style="left:27px;top:597px;width:1143px;height:2px;background:#0000ff"></div>
<div style="left:27px;top:631px;width:1143px;height:2px;background:#0000ff"></div>
<div style="left:27px;top:665px;width:1143px;height:2px;background:#0000ff"></div>
<div style="left:27px;top:699px;width:1143px;height:2px;background:#0000ff"></div>
<div style="left:27px;top:733px;width:1143px;height:2px;background:#0000ff"></div>
<div style="left:27px;top:767px;width:1143px;height:2px;background:#0000ff"></div>
<div style="left:1168px;top:121px;width:2px;height:648px;background:#0000ff"></div>
<div style="left:1170px;top:122px;width:35px;height:1px;background:#7a7a7a"></div>
<div style="left:249px;top:121px;width:1px;height:662px;background:#6e6e6e"></div>
<div class="bar" style="left:540px;top:122px;width:255px;height:14px"><div style="left:0;top:0px;width:100%;height:1px;background:linear-gradient(90deg,#5f7f9a 10%,#5f7f9a 50%,#4f6f70 90%)"></div><div style="left:0;top:1px;width:100%;height:2px;background:linear-gradient(90deg,#f0f8e8 10%,#b8d888 50%,#3a9030 90%)"></div><div style="left:0;top:3px;width:100%;height:3px;background:linear-gradient(90deg,#fcfdf8 10%,#d4f0a8 50%,#70c060 90%)"></div><div style="left:0;top:6px;width:100%;height:2px;background:linear-gradient(90deg,#c0cca0 10%,#8ca070 50%,#409838 90%)"></div><div style="left:0;top:8px;width:100%;height:4px;background:linear-gradient(90deg,#80965e 10%,#5a7858 50%,#2a6a28 90%)"></div><svg style="position:absolute;right:0;top:0" width="8" height="12"><polygon points="8,0 2,5 2,9 8,12" fill="rgba(30,10,0,0.4)"/><rect x="7" y="0" width="1" height="12" fill="rgba(0,0,0,0.5)"/></svg><svg style="position:absolute;left:0;top:0" width="6" height="12"><polygon points="0,0 5,6.0 0,12" fill="rgba(230,240,255,0.5)"/></svg></div>
<div class="lb" style="left:498px;top:124px;width:41px;height:13px;">0,41</div>
<div class="lb" style="left:797px;top:124px;width:43px;height:13px;">8,3</div>
<div class="bar" style="left:527px;top:139px;width:211px;height:14px"><div style="left:0;top:0px;width:100%;height:1px;background:linear-gradient(90deg,#7a6a6a 10%,#6a5a5a 50%,#4a3a3a 90%)"></div><div style="left:0;top:1px;width:100%;height:3px;background:linear-gradient(90deg,#f8c090 10%,#f09868 50%,#b86030 90%)"></div><div style="left:0;top:4px;width:100%;height:2px;background:linear-gradient(90deg,#f5ecd0 10%,#f0b080 50%,#d08050 90%)"></div><div style="left:0;top:6px;width:100%;height:3px;background:linear-gradient(90deg,#c8a080 10%,#b07848 50%,#8a4a28 90%)"></div><div style="left:0;top:9px;width:100%;height:2px;background:linear-gradient(90deg,#8a6848 10%,#8a5a38 50%,#5a3018 90%)"></div><div style="left:0;top:11px;width:100%;height:1px;background:linear-gradient(90deg,#6a7a7a 10%,#5a5a5a 50%,#3a3030 90%)"></div><svg style="position:absolute;right:0;top:0" width="8" height="12"><polygon points="8,0 2,5 2,9 8,12" fill="rgba(30,10,0,0.4)"/><rect x="7" y="0" width="1" height="12" fill="rgba(0,0,0,0.5)"/></svg><svg style="position:absolute;left:0;top:0" width="6" height="12"><polygon points="0,0 5,6.0 0,12" fill="rgba(230,240,255,0.5)"/></svg></div>
<div class="lb" style="left:485px;top:141px;width:41px;height:13px;">0</div>
<div class="lb" style="left:740px;top:141px;width:43px;height:13px;">6,53</div>
<div class="bar" style="left:550px;top:156px;width:429px;height:14px"><div style="left:0;top:0px;width:100%;height:1px;background:linear-gradient(90deg,#5f7f9a 10%,#5f7f9a 50%,#4f6f70 90%)"></div><div style="left:0;top:1px;width:100%;height:2px;background:linear-gradient(90deg,#f0f8e8 10%,#b8d888 50%,#3a9030 90%)"></div><div style="left:0;top:3px;width:100%;height:3px;background:linear-gradient(90deg,#fcfdf8 10%,#d4f0a8 50%,#70c060 90%)"></div><div style="left:0;top:6px;width:100%;height:2px;background:linear-gradient(90deg,#c0cca0 10%,#8ca070 50%,#409838 90%)"></div><div style="left:0;top:8px;width:100%;height:4px;background:linear-gradient(90deg,#80965e 10%,#5a7858 50%,#2a6a28 90%)"></div><svg style="position:absolute;right:0;top:0" width="8" height="12"><polygon points="8,0 2,5 2,9 8,12" fill="rgba(30,10,0,0.4)"/><rect x="7" y="0" width="1" height="12" fill="rgba(0,0,0,0.5)"/></svg><svg style="position:absolute;left:0;top:0" width="6" height="12"><polygon points="0,0 5,6.0 0,12" fill="rgba(230,240,255,0.5)"/></svg></div>
<div class="lb" style="left:508px;top:158px;width:41px;height:13px;">0,72</div>
<div class="lb" style="left:981px;top:158px;width:43px;height:13px;">32</div>
<div class="bar" style="left:725px;top:173px;width:240px;height:14px"><div style="left:0;top:0px;width:100%;height:1px;background:linear-gradient(90deg,#7a6a6a 10%,#6a5a5a 50%,#4a3a3a 90%)"></div><div style="left:0;top:1px;width:100%;height:3px;background:linear-gradient(90deg,#f8c090 10%,#f09868 50%,#b86030 90%)"></div><div style="left:0;top:4px;width:100%;height:2px;background:linear-gradient(90deg,#f5ecd0 10%,#f0b080 50%,#d08050 90%)"></div><div style="left:0;top:6px;width:100%;height:3px;background:linear-gradient(90deg,#c8a080 10%,#b07848 50%,#8a4a28 90%)"></div><div style="left:0;top:9px;width:100%;height:2px;background:linear-gradient(90deg,#8a6848 10%,#8a5a38 50%,#5a3018 90%)"></div><div style="left:0;top:11px;width:100%;height:1px;background:linear-gradient(90deg,#6a7a7a 10%,#5a5a5a 50%,#3a3030 90%)"></div><svg style="position:absolute;right:0;top:0" width="8" height="12"><polygon points="8,0 2,5 2,9 8,12" fill="rgba(30,10,0,0.4)"/><rect x="7" y="0" width="1" height="12" fill="rgba(0,0,0,0.5)"/></svg><svg style="position:absolute;left:0;top:0" width="6" height="12"><polygon points="0,0 5,6.0 0,12" fill="rgba(230,240,255,0.5)"/></svg></div>
<div class="lb" style="left:682px;top:175px;width:41px;height:13px;">6,18</div>
<div class="lb" style="left:967px;top:175px;width:43px;height:13px;">28</div>
<div class="bar" style="left:885px;top:190px;width:138px;height:14px"><div style="left:0;top:0px;width:100%;height:1px;background:linear-gradient(90deg,#5f7f9a 10%,#5f7f9a 50%,#4f6f70 90%)"></div><div style="left:0;top:1px;width:100%;height:2px;background:linear-gradient(90deg,#f0f8e8 10%,#b8d888 50%,#3a9030 90%)"></div><div style="left:0;top:3px;width:100%;height:3px;background:linear-gradient(90deg,#fcfdf8 10%,#d4f0a8 50%,#70c060 90%)"></div><div style="left:0;top:6px;width:100%;height:2px;background:linear-gradient(90deg,#c0cca0 10%,#8ca070 50%,#409838 90%)"></div><div style="left:0;top:8px;width:100%;height:4px;background:linear-gradient(90deg,#80965e 10%,#5a7858 50%,#2a6a28 90%)"></div><svg style="position:absolute;right:0;top:0" width="8" height="12"><polygon points="8,0 2,5 2,9 8,12" fill="rgba(30,10,0,0.4)"/><rect x="7" y="0" width="1" height="12" fill="rgba(0,0,0,0.5)"/></svg><svg style="position:absolute;left:0;top:0" width="6" height="12"><polygon points="0,0 5,6.0 0,12" fill="rgba(230,240,255,0.5)"/></svg></div>
<div class="lb" style="left:843px;top:192px;width:41px;height:13px;">16</div>
<div class="lb" style="left:1025px;top:192px;width:43px;height:13px;">80</div>
<div class="bar" style="left:905px;top:207px;width:200px;height:14px"><div style="left:0;top:0px;width:100%;height:1px;background:linear-gradient(90deg,#7a6a6a 10%,#6a5a5a 50%,#4a3a3a 90%)"></div><div style="left:0;top:1px;width:100%;height:3px;background:linear-gradient(90deg,#f8c090 10%,#f09868 50%,#b86030 90%)"></div><div style="left:0;top:4px;width:100%;height:2px;background:linear-gradient(90deg,#f5ecd0 10%,#f0b080 50%,#d08050 90%)"></div><div style="left:0;top:6px;width:100%;height:3px;background:linear-gradient(90deg,#c8a080 10%,#b07848 50%,#8a4a28 90%)"></div><div style="left:0;top:9px;width:100%;height:2px;background:linear-gradient(90deg,#8a6848 10%,#8a5a38 50%,#5a3018 90%)"></div><div style="left:0;top:11px;width:100%;height:1px;background:linear-gradient(90deg,#6a7a7a 10%,#5a5a5a 50%,#3a3030 90%)"></div><svg style="position:absolute;right:0;top:0" width="8" height="12"><polygon points="8,0 2,5 2,9 8,12" fill="rgba(30,10,0,0.4)"/><rect x="7" y="0" width="1" height="12" fill="rgba(0,0,0,0.5)"/></svg><svg style="position:absolute;left:0;top:0" width="6" height="12"><polygon points="0,0 5,6.0 0,12" fill="rgba(230,240,255,0.5)"/></svg></div>
<div class="lb" style="left:862px;top:209px;width:41px;height:13px;">19</div>
<div class="lb" style="left:1107px;top:209px;width:43px;height:13px;">140</div>
<div class="bar" style="left:531px;top:224px;width:136px;height:14px"><div style="left:0;top:0px;width:100%;height:1px;background:linear-gradient(90deg,#5f7f9a 10%,#5f7f9a 50%,#4f6f70 90%)"></div><div style="left:0;top:1px;width:100%;height:2px;background:linear-gradient(90deg,#f0f8e8 10%,#b8d888 50%,#3a9030 90%)"></div><div style="left:0;top:3px;width:100%;height:3px;background:linear-gradient(90deg,#fcfdf8 10%,#d4f0a8 50%,#70c060 90%)"></div><div style="left:0;top:6px;width:100%;height:2px;background:linear-gradient(90deg,#c0cca0 10%,#8ca070 50%,#409838 90%)"></div><div style="left:0;top:8px;width:100%;height:4px;background:linear-gradient(90deg,#80965e 10%,#5a7858 50%,#2a6a28 90%)"></div><svg style="position:absolute;right:0;top:0" width="8" height="12"><polygon points="8,0 2,5 2,9 8,12" fill="rgba(30,10,0,0.4)"/><rect x="7" y="0" width="1" height="12" fill="rgba(0,0,0,0.5)"/></svg><svg style="position:absolute;left:0;top:0" width="6" height="12"><polygon points="0,0 5,6.0 0,12" fill="rgba(230,240,255,0.5)"/></svg></div>
<div class="lb" style="left:488px;top:226px;width:41px;height:13px;">0,12</div>
<div class="lb" style="left:669px;top:226px;width:43px;height:13px;">4,29</div>
<div class="bar" style="left:531px;top:241px;width:134px;height:14px"><div style="left:0;top:0px;width:100%;height:1px;background:linear-gradient(90deg,#7a6a6a 10%,#6a5a5a 50%,#4a3a3a 90%)"></div><div style="left:0;top:1px;width:100%;height:3px;background:linear-gradient(90deg,#f8c090 10%,#f09868 50%,#b86030 90%)"></div><div style="left:0;top:4px;width:100%;height:2px;background:linear-gradient(90deg,#f5ecd0 10%,#f0b080 50%,#d08050 90%)"></div><div style="left:0;top:6px;width:100%;height:3px;background:linear-gradient(90deg,#c8a080 10%,#b07848 50%,#8a4a28 90%)"></div><div style="left:0;top:9px;width:100%;height:2px;background:linear-gradient(90deg,#8a6848 10%,#8a5a38 50%,#5a3018 90%)"></div><div style="left:0;top:11px;width:100%;height:1px;background:linear-gradient(90deg,#6a7a7a 10%,#5a5a5a 50%,#3a3030 90%)"></div><svg style="position:absolute;right:0;top:0" width="8" height="12"><polygon points="8,0 2,5 2,9 8,12" fill="rgba(30,10,0,0.4)"/><rect x="7" y="0" width="1" height="12" fill="rgba(0,0,0,0.5)"/></svg><svg style="position:absolute;left:0;top:0" width="6" height="12"><polygon points="0,0 5,6.0 0,12" fill="rgba(230,240,255,0.5)"/></svg></div>
<div class="lb" style="left:488px;top:243px;width:41px;height:13px;">0,12</div>
<div class="lb" style="left:667px;top:243px;width:43px;height:13px;">4,25</div>
<div class="bar" style="left:531px;top:258px;width:319px;height:14px"><div style="left:0;top:0px;width:100%;height:1px;background:linear-gradient(90deg,#5f7f9a 10%,#5f7f9a 50%,#4f6f70 90%)"></div><div style="left:0;top:1px;width:100%;height:2px;background:linear-gradient(90deg,#f0f8e8 10%,#b8d888 50%,#3a9030 90%)"></div><div style="left:0;top:3px;width:100%;height:3px;background:linear-gradient(90deg,#fcfdf8 10%,#d4f0a8 50%,#70c060 90%)"></div><div style="left:0;top:6px;width:100%;height:2px;background:linear-gradient(90deg,#c0cca0 10%,#8ca070 50%,#409838 90%)"></div><div style="left:0;top:8px;width:100%;height:4px;background:linear-gradient(90deg,#80965e 10%,#5a7858 50%,#2a6a28 90%)"></div><svg style="position:absolute;right:0;top:0" width="8" height="12"><polygon points="8,0 2,5 2,9 8,12" fill="rgba(30,10,0,0.4)"/><rect x="7" y="0" width="1" height="12" fill="rgba(0,0,0,0.5)"/></svg><svg style="position:absolute;left:0;top:0" width="6" height="12"><polygon points="0,0 5,6.0 0,12" fill="rgba(230,240,255,0.5)"/></svg></div>
<div class="lb" style="left:488px;top:260px;width:41px;height:13px;">0,12</div>
<div class="lb" style="left:852px;top:260px;width:43px;height:13px;">10,04</div>
<div class="bar" style="left:531px;top:275px;width:198px;height:14px"><div style="left:0;top:0px;width:100%;height:1px;background:linear-gradient(90deg,#7a6a6a 10%,#6a5a5a 50%,#4a3a3a 90%)"></div><div style="left:0;top:1px;width:100%;height:3px;background:linear-gradient(90deg,#f8c090 10%,#f09868 50%,#b86030 90%)"></div><div style="left:0;top:4px;width:100%;height:2px;background:linear-gradient(90deg,#f5ecd0 10%,#f0b080 50%,#d08050 90%)"></div><div style="left:0;top:6px;width:100%;height:3px;background:linear-gradient(90deg,#c8a080 10%,#b07848 50%,#8a4a28 90%)"></div><div style="left:0;top:9px;width:100%;height:2px;background:linear-gradient(90deg,#8a6848 10%,#8a5a38 50%,#5a3018 90%)"></div><div style="left:0;top:11px;width:100%;height:1px;background:linear-gradient(90deg,#6a7a7a 10%,#5a5a5a 50%,#3a3030 90%)"></div><svg style="position:absolute;right:0;top:0" width="8" height="12"><polygon points="8,0 2,5 2,9 8,12" fill="rgba(30,10,0,0.4)"/><rect x="7" y="0" width="1" height="12" fill="rgba(0,0,0,0.5)"/></svg><svg style="position:absolute;left:0;top:0" width="6" height="12"><polygon points="0,0 5,6.0 0,12" fill="rgba(230,240,255,0.5)"/></svg></div>
<div class="lb" style="left:488px;top:277px;width:41px;height:13px;">0,12</div>
<div class="lb" style="left:731px;top:277px;width:43px;height:13px;">6,24</div>
<div class="bar" style="left:531px;top:292px;width:319px;height:14px"><div style="left:0;top:0px;width:100%;height:1px;background:linear-gradient(90deg,#5f7f9a 10%,#5f7f9a 50%,#4f6f70 90%)"></div><div style="left:0;top:1px;width:100%;height:2px;background:linear-gradient(90deg,#f0f8e8 10%,#b8d888 50%,#3a9030 90%)"></div><div style="left:0;top:3px;width:100%;height:3px;background:linear-gradient(90deg,#fcfdf8 10%,#d4f0a8 50%,#70c060 90%)"></div><div style="left:0;top:6px;width:100%;height:2px;background:linear-gradient(90deg,#c0cca0 10%,#8ca070 50%,#409838 90%)"></div><div style="left:0;top:8px;width:100%;height:4px;background:linear-gradient(90deg,#80965e 10%,#5a7858 50%,#2a6a28 90%)"></div><svg style="position:absolute;right:0;top:0" width="8" height="12"><polygon points="8,0 2,5 2,9 8,12" fill="rgba(30,10,0,0.4)"/><rect x="7" y="0" width="1" height="12" fill="rgba(0,0,0,0.5)"/></svg><svg style="position:absolute;left:0;top:0" width="6" height="12"><polygon points="0,0 5,6.0 0,12" fill="rgba(230,240,255,0.5)"/></svg></div>
<div class="lb" style="left:488px;top:294px;width:41px;height:13px;">0,12</div>
<div class="lb" style="left:852px;top:294px;width:43px;height:13px;">10,04</div>
<div class="bar" style="left:531px;top:309px;width:198px;height:14px"><div style="left:0;top:0px;width:100%;height:1px;background:linear-gradient(90deg,#7a6a6a 10%,#6a5a5a 50%,#4a3a3a 90%)"></div><div style="left:0;top:1px;width:100%;height:3px;background:linear-gradient(90deg,#f8c090 10%,#f09868 50%,#b86030 90%)"></div><div style="left:0;top:4px;width:100%;height:2px;background:linear-gradient(90deg,#f5ecd0 10%,#f0b080 50%,#d08050 90%)"></div><div style="left:0;top:6px;width:100%;height:3px;background:linear-gradient(90deg,#c8a080 10%,#b07848 50%,#8a4a28 90%)"></div><div style="left:0;top:9px;width:100%;height:2px;background:linear-gradient(90deg,#8a6848 10%,#8a5a38 50%,#5a3018 90%)"></div><div style="left:0;top:11px;width:100%;height:1px;background:linear-gradient(90deg,#6a7a7a 10%,#5a5a5a 50%,#3a3030 90%)"></div><svg style="position:absolute;right:0;top:0" width="8" height="12"><polygon points="8,0 2,5 2,9 8,12" fill="rgba(30,10,0,0.4)"/><rect x="7" y="0" width="1" height="12" fill="rgba(0,0,0,0.5)"/></svg><svg style="position:absolute;left:0;top:0" width="6" height="12"><polygon points="0,0 5,6.0 0,12" fill="rgba(230,240,255,0.5)"/></svg></div>
<div class="lb" style="left:488px;top:311px;width:41px;height:13px;">0,12</div>
<div class="lb" style="left:731px;top:311px;width:43px;height:13px;">6,24</div>
<div class="bar" style="left:531px;top:326px;width:318px;height:14px"><div style="left:0;top:0px;width:100%;height:1px;background:linear-gradient(90deg,#5f7f9a 10%,#5f7f9a 50%,#4f6f70 90%)"></div><div style="left:0;top:1px;width:100%;height:2px;background:linear-gradient(90deg,#f0f8e8 10%,#b8d888 50%,#3a9030 90%)"></div><div style="left:0;top:3px;width:100%;height:3px;background:linear-gradient(90deg,#fcfdf8 10%,#d4f0a8 50%,#70c060 90%)"></div><div style="left:0;top:6px;width:100%;height:2px;background:linear-gradient(90deg,#c0cca0 10%,#8ca070 50%,#409838 90%)"></div><div style="left:0;top:8px;width:100%;height:4px;background:linear-gradient(90deg,#80965e 10%,#5a7858 50%,#2a6a28 90%)"></div><svg style="position:absolute;right:0;top:0" width="8" height="12"><polygon points="8,0 2,5 2,9 8,12" fill="rgba(30,10,0,0.4)"/><rect x="7" y="0" width="1" height="12" fill="rgba(0,0,0,0.5)"/></svg><svg style="position:absolute;left:0;top:0" width="6" height="12"><polygon points="0,0 5,6.0 0,12" fill="rgba(230,240,255,0.5)"/></svg></div>
<div class="lb" style="left:488px;top:328px;width:41px;height:13px;">0,12</div>
<div class="lb" style="left:851px;top:328px;width:43px;height:13px;">10</div>
<div class="bar" style="left:531px;top:343px;width:318px;height:14px"><div style="left:0;top:0px;width:100%;height:1px;background:linear-gradient(90deg,#7a6a6a 10%,#6a5a5a 50%,#4a3a3a 90%)"></div><div style="left:0;top:1px;width:100%;height:3px;background:linear-gradient(90deg,#f8c090 10%,#f09868 50%,#b86030 90%)"></div><div style="left:0;top:4px;width:100%;height:2px;background:linear-gradient(90deg,#f5ecd0 10%,#f0b080 50%,#d08050 90%)"></div><div style="left:0;top:6px;width:100%;height:3px;background:linear-gradient(90deg,#c8a080 10%,#b07848 50%,#8a4a28 90%)"></div><div style="left:0;top:9px;width:100%;height:2px;background:linear-gradient(90deg,#8a6848 10%,#8a5a38 50%,#5a3018 90%)"></div><div style="left:0;top:11px;width:100%;height:1px;background:linear-gradient(90deg,#6a7a7a 10%,#5a5a5a 50%,#3a3030 90%)"></div><svg style="position:absolute;right:0;top:0" width="8" height="12"><polygon points="8,0 2,5 2,9 8,12" fill="rgba(30,10,0,0.4)"/><rect x="7" y="0" width="1" height="12" fill="rgba(0,0,0,0.5)"/></svg><svg style="position:absolute;left:0;top:0" width="6" height="12"><polygon points="0,0 5,6.0 0,12" fill="rgba(230,240,255,0.5)"/></svg></div>
<div class="lb" style="left:488px;top:345px;width:41px;height:13px;">0,12</div>
<div class="lb" style="left:851px;top:345px;width:43px;height:13px;">10</div>
<div class="bar" style="left:531px;top:360px;width:332px;height:14px"><div style="left:0;top:0px;width:100%;height:1px;background:linear-gradient(90deg,#5f7f9a 10%,#5f7f9a 50%,#4f6f70 90%)"></div><div style="left:0;top:1px;width:100%;height:2px;background:linear-gradient(90deg,#f0f8e8 10%,#b8d888 50%,#3a9030 90%)"></div><div style="left:0;top:3px;width:100%;height:3px;background:linear-gradient(90deg,#fcfdf8 10%,#d4f0a8 50%,#70c060 90%)"></div><div style="left:0;top:6px;width:100%;height:2px;background:linear-gradient(90deg,#c0cca0 10%,#8ca070 50%,#409838 90%)"></div><div style="left:0;top:8px;width:100%;height:4px;background:linear-gradient(90deg,#80965e 10%,#5a7858 50%,#2a6a28 90%)"></div><svg style="position:absolute;right:0;top:0" width="8" height="12"><polygon points="8,0 2,5 2,9 8,12" fill="rgba(30,10,0,0.4)"/><rect x="7" y="0" width="1" height="12" fill="rgba(0,0,0,0.5)"/></svg><svg style="position:absolute;left:0;top:0" width="6" height="12"><polygon points="0,0 5,6.0 0,12" fill="rgba(230,240,255,0.5)"/></svg></div>
<div class="lb" style="left:488px;top:362px;width:41px;height:13px;">0,12</div>
<div class="lb" style="left:865px;top:362px;width:43px;height:13px;">12</div>
<div class="bar" style="left:562px;top:377px;width:234px;height:14px"><div style="left:0;top:0px;width:100%;height:1px;background:linear-gradient(90deg,#7a6a6a 10%,#6a5a5a 50%,#4a3a3a 90%)"></div><div style="left:0;top:1px;width:100%;height:3px;background:linear-gradient(90deg,#f8c090 10%,#f09868 50%,#b86030 90%)"></div><div style="left:0;top:4px;width:100%;height:2px;background:linear-gradient(90deg,#f5ecd0 10%,#f0b080 50%,#d08050 90%)"></div><div style="left:0;top:6px;width:100%;height:3px;background:linear-gradient(90deg,#c8a080 10%,#b07848 50%,#8a4a28 90%)"></div><div style="left:0;top:9px;width:100%;height:2px;background:linear-gradient(90deg,#8a6848 10%,#8a5a38 50%,#5a3018 90%)"></div><div style="left:0;top:11px;width:100%;height:1px;background:linear-gradient(90deg,#6a7a7a 10%,#5a5a5a 50%,#3a3030 90%)"></div><svg style="position:absolute;right:0;top:0" width="8" height="12"><polygon points="8,0 2,5 2,9 8,12" fill="rgba(30,10,0,0.4)"/><rect x="7" y="0" width="1" height="12" fill="rgba(0,0,0,0.5)"/></svg><svg style="position:absolute;left:0;top:0" width="6" height="12"><polygon points="0,0 5,6.0 0,12" fill="rgba(230,240,255,0.5)"/></svg></div>
<div class="lb" style="left:520px;top:379px;width:41px;height:13px;">1,09</div>
<div class="lb" style="left:798px;top:379px;width:43px;height:13px;">8,34</div>
<div class="bar" style="left:531px;top:394px;width:233px;height:14px"><div style="left:0;top:0px;width:100%;height:1px;background:linear-gradient(90deg,#5f7f9a 10%,#5f7f9a 50%,#4f6f70 90%)"></div><div style="left:0;top:1px;width:100%;height:2px;background:linear-gradient(90deg,#f0f8e8 10%,#b8d888 50%,#3a9030 90%)"></div><div style="left:0;top:3px;width:100%;height:3px;background:linear-gradient(90deg,#fcfdf8 10%,#d4f0a8 50%,#70c060 90%)"></div><div style="left:0;top:6px;width:100%;height:2px;background:linear-gradient(90deg,#c0cca0 10%,#8ca070 50%,#409838 90%)"></div><div style="left:0;top:8px;width:100%;height:4px;background:linear-gradient(90deg,#80965e 10%,#5a7858 50%,#2a6a28 90%)"></div><svg style="position:absolute;right:0;top:0" width="8" height="12"><polygon points="8,0 2,5 2,9 8,12" fill="rgba(30,10,0,0.4)"/><rect x="7" y="0" width="1" height="12" fill="rgba(0,0,0,0.5)"/></svg><svg style="position:absolute;left:0;top:0" width="6" height="12"><polygon points="0,0 5,6.0 0,12" fill="rgba(230,240,255,0.5)"/></svg></div>
<div class="lb" style="left:488px;top:396px;width:41px;height:13px;">0,12</div>
<div class="lb" style="left:766px;top:396px;width:43px;height:13px;">7,35</div>
<div class="bar" style="left:527px;top:411px;width:3px;height:14px"><div style="left:0;top:0px;width:100%;height:1px;background:linear-gradient(90deg,#7a6a6a 10%,#6a5a5a 50%,#4a3a3a 90%)"></div><div style="left:0;top:1px;width:100%;height:3px;background:linear-gradient(90deg,#f8c090 10%,#f09868 50%,#b86030 90%)"></div><div style="left:0;top:4px;width:100%;height:2px;background:linear-gradient(90deg,#f5ecd0 10%,#f0b080 50%,#d08050 90%)"></div><div style="left:0;top:6px;width:100%;height:3px;background:linear-gradient(90deg,#c8a080 10%,#b07848 50%,#8a4a28 90%)"></div><div style="left:0;top:9px;width:100%;height:2px;background:linear-gradient(90deg,#8a6848 10%,#8a5a38 50%,#5a3018 90%)"></div><div style="left:0;top:11px;width:100%;height:1px;background:linear-gradient(90deg,#6a7a7a 10%,#5a5a5a 50%,#3a3030 90%)"></div><div style="right:0;top:0;width:1px;height:100%;background:rgba(0,0,0,.7)"></div></div>
<div class="lb" style="left:485px;top:413px;width:41px;height:13px;">0</div>
<div class="lb" style="left:532px;top:413px;width:43px;height:13px;">0</div>
<div class="bar" style="left:542px;top:428px;width:37px;height:14px"><div style="left:0;top:0px;width:100%;height:1px;background:linear-gradient(90deg,#5f7f9a 10%,#5f7f9a 50%,#4f6f70 90%)"></div><div style="left:0;top:1px;width:100%;height:2px;background:linear-gradient(90deg,#f0f8e8 10%,#b8d888 50%,#3a9030 90%)"></div><div style="left:0;top:3px;width:100%;height:3px;background:linear-gradient(90deg,#fcfdf8 10%,#d4f0a8 50%,#70c060 90%)"></div><div style="left:0;top:6px;width:100%;height:2px;background:linear-gradient(90deg,#c0cca0 10%,#8ca070 50%,#409838 90%)"></div><div style="left:0;top:8px;width:100%;height:4px;background:linear-gradient(90deg,#80965e 10%,#5a7858 50%,#2a6a28 90%)"></div><svg style="position:absolute;right:0;top:0" width="8" height="12"><polygon points="8,0 2,5 2,9 8,12" fill="rgba(30,10,0,0.4)"/><rect x="7" y="0" width="1" height="12" fill="rgba(0,0,0,0.5)"/></svg><svg style="position:absolute;left:0;top:0" width="6" height="12"><polygon points="0,0 5,6.0 0,12" fill="rgba(230,240,255,0.5)"/></svg></div>
<div class="lb" style="left:500px;top:430px;width:41px;height:13px;">0,47</div>
<div class="lb" style="left:581px;top:430px;width:43px;height:13px;">1,54</div>
<div class="bar" style="left:527px;top:445px;width:342px;height:14px"><div style="left:0;top:0px;width:100%;height:1px;background:linear-gradient(90deg,#7a6a6a 10%,#6a5a5a 50%,#4a3a3a 90%)"></div><div style="left:0;top:1px;width:100%;height:3px;background:linear-gradient(90deg,#f8c090 10%,#f09868 50%,#b86030 90%)"></div><div style="left:0;top:4px;width:100%;height:2px;background:linear-gradient(90deg,#f5ecd0 10%,#f0b080 50%,#d08050 90%)"></div><div style="left:0;top:6px;width:100%;height:3px;background:linear-gradient(90deg,#c8a080 10%,#b07848 50%,#8a4a28 90%)"></div><div style="left:0;top:9px;width:100%;height:2px;background:linear-gradient(90deg,#8a6848 10%,#8a5a38 50%,#5a3018 90%)"></div><div style="left:0;top:11px;width:100%;height:1px;background:linear-gradient(90deg,#6a7a7a 10%,#5a5a5a 50%,#3a3030 90%)"></div><svg style="position:absolute;right:0;top:0" width="8" height="12"><polygon points="8,0 2,5 2,9 8,12" fill="rgba(30,10,0,0.4)"/><rect x="7" y="0" width="1" height="12" fill="rgba(0,0,0,0.5)"/></svg><svg style="position:absolute;left:0;top:0" width="6" height="12"><polygon points="0,0 5,6.0 0,12" fill="rgba(230,240,255,0.5)"/></svg></div>
<div class="lb" style="left:485px;top:447px;width:41px;height:13px;">0</div>
<div class="lb" style="left:871px;top:447px;width:43px;height:13px;">13</div>
<div class="bar" style="left:531px;top:462px;width:100px;height:14px"><div style="left:0;top:0px;width:100%;height:1px;background:linear-gradient(90deg,#5f7f9a 10%,#5f7f9a 50%,#4f6f70 90%)"></div><div style="left:0;top:1px;width:100%;height:2px;background:linear-gradient(90deg,#f0f8e8 10%,#b8d888 50%,#3a9030 90%)"></div><div style="left:0;top:3px;width:100%;height:3px;background:linear-gradient(90deg,#fcfdf8 10%,#d4f0a8 50%,#70c060 90%)"></div><div style="left:0;top:6px;width:100%;height:2px;background:linear-gradient(90deg,#c0cca0 10%,#8ca070 50%,#409838 90%)"></div><div style="left:0;top:8px;width:100%;height:4px;background:linear-gradient(90deg,#80965e 10%,#5a7858 50%,#2a6a28 90%)"></div><svg style="position:absolute;right:0;top:0" width="8" height="12"><polygon points="8,0 2,5 2,9 8,12" fill="rgba(30,10,0,0.4)"/><rect x="7" y="0" width="1" height="12" fill="rgba(0,0,0,0.5)"/></svg><svg style="position:absolute;left:0;top:0" width="6" height="12"><polygon points="0,0 5,6.0 0,12" fill="rgba(230,240,255,0.5)"/></svg></div>
<div class="lb" style="left:488px;top:464px;width:41px;height:13px;">0,12</div>
<div class="lb" style="left:633px;top:464px;width:43px;height:13px;">3,18</div>
<div class="bar" style="left:535px;top:479px;width:81px;height:14px"><div style="left:0;top:0px;width:100%;height:1px;background:linear-gradient(90deg,#7a6a6a 10%,#6a5a5a 50%,#4a3a3a 90%)"></div><div style="left:0;top:1px;width:100%;height:3px;background:linear-gradient(90deg,#f8c090 10%,#f09868 50%,#b86030 90%)"></div><div style="left:0;top:4px;width:100%;height:2px;background:linear-gradient(90deg,#f5ecd0 10%,#f0b080 50%,#d08050 90%)"></div><div style="left:0;top:6px;width:100%;height:3px;background:linear-gradient(90deg,#c8a080 10%,#b07848 50%,#8a4a28 90%)"></div><div style="left:0;top:9px;width:100%;height:2px;background:linear-gradient(90deg,#8a6848 10%,#8a5a38 50%,#5a3018 90%)"></div><div style="left:0;top:11px;width:100%;height:1px;background:linear-gradient(90deg,#6a7a7a 10%,#5a5a5a 50%,#3a3030 90%)"></div><svg style="position:absolute;right:0;top:0" width="8" height="12"><polygon points="8,0 2,5 2,9 8,12" fill="rgba(30,10,0,0.4)"/><rect x="7" y="0" width="1" height="12" fill="rgba(0,0,0,0.5)"/></svg><svg style="position:absolute;left:0;top:0" width="6" height="12"><polygon points="0,0 5,6.0 0,12" fill="rgba(230,240,255,0.5)"/></svg></div>
<div class="lb" style="left:492px;top:481px;width:41px;height:13px;">0,23</div>
<div class="lb" style="left:618px;top:481px;width:43px;height:13px;">2,71</div>
<div class="bar" style="left:531px;top:496px;width:163px;height:14px"><div style="left:0;top:0px;width:100%;height:1px;background:linear-gradient(90deg,#5f7f9a 10%,#5f7f9a 50%,#4f6f70 90%)"></div><div style="left:0;top:1px;width:100%;height:2px;background:linear-gradient(90deg,#f0f8e8 10%,#b8d888 50%,#3a9030 90%)"></div><div style="left:0;top:3px;width:100%;height:3px;background:linear-gradient(90deg,#fcfdf8 10%,#d4f0a8 50%,#70c060 90%)"></div><div style="left:0;top:6px;width:100%;height:2px;background:linear-gradient(90deg,#c0cca0 10%,#8ca070 50%,#409838 90%)"></div><div style="left:0;top:8px;width:100%;height:4px;background:linear-gradient(90deg,#80965e 10%,#5a7858 50%,#2a6a28 90%)"></div><svg style="position:absolute;right:0;top:0" width="8" height="12"><polygon points="8,0 2,5 2,9 8,12" fill="rgba(30,10,0,0.4)"/><rect x="7" y="0" width="1" height="12" fill="rgba(0,0,0,0.5)"/></svg><svg style="position:absolute;left:0;top:0" width="6" height="12"><polygon points="0,0 5,6.0 0,12" fill="rgba(230,240,255,0.5)"/></svg></div>
<div class="lb" style="left:488px;top:498px;width:41px;height:13px;">0,12</div>
<div class="lb" style="left:696px;top:498px;width:43px;height:13px;">5,15</div>
<div class="bar" style="left:531px;top:513px;width:261px;height:14px"><div style="left:0;top:0px;width:100%;height:1px;background:linear-gradient(90deg,#7a6a6a 10%,#6a5a5a 50%,#4a3a3a 90%)"></div><div style="left:0;top:1px;width:100%;height:3px;background:linear-gradient(90deg,#f8c090 10%,#f09868 50%,#b86030 90%)"></div><div style="left:0;top:4px;width:100%;height:2px;background:linear-gradient(90deg,#f5ecd0 10%,#f0b080 50%,#d08050 90%)"></div><div style="left:0;top:6px;width:100%;height:3px;background:linear-gradient(90deg,#c8a080 10%,#b07848 50%,#8a4a28 90%)"></div><div style="left:0;top:9px;width:100%;height:2px;background:linear-gradient(90deg,#8a6848 10%,#8a5a38 50%,#5a3018 90%)"></div><div style="left:0;top:11px;width:100%;height:1px;background:linear-gradient(90deg,#6a7a7a 10%,#5a5a5a 50%,#3a3030 90%)"></div><svg style="position:absolute;right:0;top:0" width="8" height="12"><polygon points="8,0 2,5 2,9 8,12" fill="rgba(30,10,0,0.4)"/><rect x="7" y="0" width="1" height="12" fill="rgba(0,0,0,0.5)"/></svg><svg style="position:absolute;left:0;top:0" width="6" height="12"><polygon points="0,0 5,6.0 0,12" fill="rgba(230,240,255,0.5)"/></svg></div>
<div class="lb" style="left:488px;top:515px;width:41px;height:13px;">0,12</div>
<div class="lb" style="left:794px;top:515px;width:43px;height:13px;">8,23</div>
<div class="bar" style="left:527px;top:530px;width:35px;height:14px"><div style="left:0;top:0px;width:100%;height:1px;background:linear-gradient(90deg,#5f7f9a 10%,#5f7f9a 50%,#4f6f70 90%)"></div><div style="left:0;top:1px;width:100%;height:2px;background:linear-gradient(90deg,#f0f8e8 10%,#b8d888 50%,#3a9030 90%)"></div><div style="left:0;top:3px;width:100%;height:3px;background:linear-gradient(90deg,#fcfdf8 10%,#d4f0a8 50%,#70c060 90%)"></div><div style="left:0;top:6px;width:100%;height:2px;background:linear-gradient(90deg,#c0cca0 10%,#8ca070 50%,#409838 90%)"></div><div style="left:0;top:8px;width:100%;height:4px;background:linear-gradient(90deg,#80965e 10%,#5a7858 50%,#2a6a28 90%)"></div><svg style="position:absolute;right:0;top:0" width="8" height="12"><polygon points="8,0 2,5 2,9 8,12" fill="rgba(30,10,0,0.4)"/><rect x="7" y="0" width="1" height="12" fill="rgba(0,0,0,0.5)"/></svg><svg style="position:absolute;left:0;top:0" width="6" height="12"><polygon points="0,0 5,6.0 0,12" fill="rgba(230,240,255,0.5)"/></svg></div>
<div class="lb" style="left:485px;top:532px;width:41px;height:13px;">0</div>
<div class="lb" style="left:564px;top:532px;width:43px;height:13px;">1,05</div>
<div class="bar" style="left:527px;top:547px;width:3px;height:14px"><div style="left:0;top:0px;width:100%;height:1px;background:linear-gradient(90deg,#7a6a6a 10%,#6a5a5a 50%,#4a3a3a 90%)"></div><div style="left:0;top:1px;width:100%;height:3px;background:linear-gradient(90deg,#f8c090 10%,#f09868 50%,#b86030 90%)"></div><div style="left:0;top:4px;width:100%;height:2px;background:linear-gradient(90deg,#f5ecd0 10%,#f0b080 50%,#d08050 90%)"></div><div style="left:0;top:6px;width:100%;height:3px;background:linear-gradient(90deg,#c8a080 10%,#b07848 50%,#8a4a28 90%)"></div><div style="left:0;top:9px;width:100%;height:2px;background:linear-gradient(90deg,#8a6848 10%,#8a5a38 50%,#5a3018 90%)"></div><div style="left:0;top:11px;width:100%;height:1px;background:linear-gradient(90deg,#6a7a7a 10%,#5a5a5a 50%,#3a3030 90%)"></div><div style="right:0;top:0;width:1px;height:100%;background:rgba(0,0,0,.7)"></div></div>
<div class="lb" style="left:485px;top:549px;width:41px;height:13px;">0</div>
<div class="lb" style="left:532px;top:549px;width:43px;height:13px;">0</div>
<div class="bar" style="left:531px;top:564px;width:134px;height:14px"><div style="left:0;top:0px;width:100%;height:1px;background:linear-gradient(90deg,#5f7f9a 10%,#5f7f9a 50%,#4f6f70 90%)"></div><div style="left:0;top:1px;width:100%;height:2px;background:linear-gradient(90deg,#f0f8e8 10%,#b8d888 50%,#3a9030 90%)"></div><div style="left:0;top:3px;width:100%;height:3px;background:linear-gradient(90deg,#fcfdf8 10%,#d4f0a8 50%,#70c060 90%)"></div><div style="left:0;top:6px;width:100%;height:2px;background:linear-gradient(90deg,#c0cca0 10%,#8ca070 50%,#409838 90%)"></div><div style="left:0;top:8px;width:100%;height:4px;background:linear-gradient(90deg,#80965e 10%,#5a7858 50%,#2a6a28 90%)"></div><svg style="position:absolute;right:0;top:0" width="8" height="12"><polygon points="8,0 2,5 2,9 8,12" fill="rgba(30,10,0,0.4)"/><rect x="7" y="0" width="1" height="12" fill="rgba(0,0,0,0.5)"/></svg><svg style="position:absolute;left:0;top:0" width="6" height="12"><polygon points="0,0 5,6.0 0,12" fill="rgba(230,240,255,0.5)"/></svg></div>
<div class="lb" style="left:488px;top:566px;width:41px;height:13px;">0,12</div>
<div class="lb" style="left:667px;top:566px;width:43px;height:13px;">4,25</div>
<div class="bar" style="left:531px;top:581px;width:134px;height:14px"><div style="left:0;top:0px;width:100%;height:1px;background:linear-gradient(90deg,#7a6a6a 10%,#6a5a5a 50%,#4a3a3a 90%)"></div><div style="left:0;top:1px;width:100%;height:3px;background:linear-gradient(90deg,#f8c090 10%,#f09868 50%,#b86030 90%)"></div><div style="left:0;top:4px;width:100%;height:2px;background:linear-gradient(90deg,#f5ecd0 10%,#f0b080 50%,#d08050 90%)"></div><div style="left:0;top:6px;width:100%;height:3px;background:linear-gradient(90deg,#c8a080 10%,#b07848 50%,#8a4a28 90%)"></div><div style="left:0;top:9px;width:100%;height:2px;background:linear-gradient(90deg,#8a6848 10%,#8a5a38 50%,#5a3018 90%)"></div><div style="left:0;top:11px;width:100%;height:1px;background:linear-gradient(90deg,#6a7a7a 10%,#5a5a5a 50%,#3a3030 90%)"></div><svg style="position:absolute;right:0;top:0" width="8" height="12"><polygon points="8,0 2,5 2,9 8,12" fill="rgba(30,10,0,0.4)"/><rect x="7" y="0" width="1" height="12" fill="rgba(0,0,0,0.5)"/></svg><svg style="position:absolute;left:0;top:0" width="6" height="12"><polygon points="0,0 5,6.0 0,12" fill="rgba(230,240,255,0.5)"/></svg></div>
<div class="lb" style="left:488px;top:583px;width:41px;height:13px;">0,12</div>
<div class="lb" style="left:667px;top:583px;width:43px;height:13px;">4,25</div>
<div class="bar" style="left:531px;top:598px;width:11px;height:14px"><div style="left:0;top:0px;width:100%;height:1px;background:linear-gradient(90deg,#5f7f9a 10%,#5f7f9a 50%,#4f6f70 90%)"></div><div style="left:0;top:1px;width:100%;height:2px;background:linear-gradient(90deg,#f0f8e8 10%,#b8d888 50%,#3a9030 90%)"></div><div style="left:0;top:3px;width:100%;height:3px;background:linear-gradient(90deg,#fcfdf8 10%,#d4f0a8 50%,#70c060 90%)"></div><div style="left:0;top:6px;width:100%;height:2px;background:linear-gradient(90deg,#c0cca0 10%,#8ca070 50%,#409838 90%)"></div><div style="left:0;top:8px;width:100%;height:4px;background:linear-gradient(90deg,#80965e 10%,#5a7858 50%,#2a6a28 90%)"></div><svg style="position:absolute;right:0;top:0" width="8" height="12"><polygon points="8,0 2,5 2,9 8,12" fill="rgba(30,10,0,0.4)"/><rect x="7" y="0" width="1" height="12" fill="rgba(0,0,0,0.5)"/></svg><svg style="position:absolute;left:0;top:0" width="6" height="12"><polygon points="0,0 5,6.0 0,12" fill="rgba(230,240,255,0.5)"/></svg></div>
<div class="lb" style="left:488px;top:600px;width:41px;height:13px;">0,12</div>
<div class="lb" style="left:544px;top:600px;width:43px;height:13px;">0,41</div>
<div class="bar" style="left:531px;top:615px;width:36px;height:14px"><div style="left:0;top:0px;width:100%;height:1px;background:linear-gradient(90deg,#7a6a6a 10%,#6a5a5a 50%,#4a3a3a 90%)"></div><div style="left:0;top:1px;width:100%;height:3px;background:linear-gradient(90deg,#f8c090 10%,#f09868 50%,#b86030 90%)"></div><div style="left:0;top:4px;width:100%;height:2px;background:linear-gradient(90deg,#f5ecd0 10%,#f0b080 50%,#d08050 90%)"></div><div style="left:0;top:6px;width:100%;height:3px;background:linear-gradient(90deg,#c8a080 10%,#b07848 50%,#8a4a28 90%)"></div><div style="left:0;top:9px;width:100%;height:2px;background:linear-gradient(90deg,#8a6848 10%,#8a5a38 50%,#5a3018 90%)"></div><div style="left:0;top:11px;width:100%;height:1px;background:linear-gradient(90deg,#6a7a7a 10%,#5a5a5a 50%,#3a3030 90%)"></div><svg style="position:absolute;right:0;top:0" width="8" height="12"><polygon points="8,0 2,5 2,9 8,12" fill="rgba(30,10,0,0.4)"/><rect x="7" y="0" width="1" height="12" fill="rgba(0,0,0,0.5)"/></svg><svg style="position:absolute;left:0;top:0" width="6" height="12"><polygon points="0,0 5,6.0 0,12" fill="rgba(230,240,255,0.5)"/></svg></div>
<div class="lb" style="left:488px;top:617px;width:41px;height:13px;">0,12</div>
<div class="lb" style="left:569px;top:617px;width:43px;height:13px;">1,17</div>
<div class="bar" style="left:632px;top:632px;width:75px;height:14px"><div style="left:0;top:0px;width:100%;height:1px;background:linear-gradient(90deg,#5f7f9a 10%,#5f7f9a 50%,#4f6f70 90%)"></div><div style="left:0;top:1px;width:100%;height:2px;background:linear-gradient(90deg,#f0f8e8 10%,#b8d888 50%,#3a9030 90%)"></div><div style="left:0;top:3px;width:100%;height:3px;background:linear-gradient(90deg,#fcfdf8 10%,#d4f0a8 50%,#70c060 90%)"></div><div style="left:0;top:6px;width:100%;height:2px;background:linear-gradient(90deg,#c0cca0 10%,#8ca070 50%,#409838 90%)"></div><div style="left:0;top:8px;width:100%;height:4px;background:linear-gradient(90deg,#80965e 10%,#5a7858 50%,#2a6a28 90%)"></div><svg style="position:absolute;right:0;top:0" width="8" height="12"><polygon points="8,0 2,5 2,9 8,12" fill="rgba(30,10,0,0.4)"/><rect x="7" y="0" width="1" height="12" fill="rgba(0,0,0,0.5)"/></svg><svg style="position:absolute;left:0;top:0" width="6" height="12"><polygon points="0,0 5,6.0 0,12" fill="rgba(230,240,255,0.5)"/></svg></div>
<div class="lb" style="left:589px;top:634px;width:41px;height:13px;">3,24</div>
<div class="lb" style="left:709px;top:634px;width:43px;height:13px;">5,56</div>
<div class="bar" style="left:594px;top:649px;width:269px;height:14px"><div style="left:0;top:0px;width:100%;height:1px;background:linear-gradient(90deg,#7a6a6a 10%,#6a5a5a 50%,#4a3a3a 90%)"></div><div style="left:0;top:1px;width:100%;height:3px;background:linear-gradient(90deg,#f8c090 10%,#f09868 50%,#b86030 90%)"></div><div style="left:0;top:4px;width:100%;height:2px;background:linear-gradient(90deg,#f5ecd0 10%,#f0b080 50%,#d08050 90%)"></div><div style="left:0;top:6px;width:100%;height:3px;background:linear-gradient(90deg,#c8a080 10%,#b07848 50%,#8a4a28 90%)"></div><div style="left:0;top:9px;width:100%;height:2px;background:linear-gradient(90deg,#8a6848 10%,#8a5a38 50%,#5a3018 90%)"></div><div style="left:0;top:11px;width:100%;height:1px;background:linear-gradient(90deg,#6a7a7a 10%,#5a5a5a 50%,#3a3030 90%)"></div><svg style="position:absolute;right:0;top:0" width="8" height="12"><polygon points="8,0 2,5 2,9 8,12" fill="rgba(30,10,0,0.4)"/><rect x="7" y="0" width="1" height="12" fill="rgba(0,0,0,0.5)"/></svg><svg style="position:absolute;left:0;top:0" width="6" height="12"><polygon points="0,0 5,6.0 0,12" fill="rgba(230,240,255,0.5)"/></svg></div>
<div class="lb" style="left:552px;top:651px;width:41px;height:13px;">2,11</div>
<div class="lb" style="left:865px;top:651px;width:43px;height:13px;">12</div>
<div class="bar" style="left:562px;top:666px;width:166px;height:14px"><div style="left:0;top:0px;width:100%;height:1px;background:linear-gradient(90deg,#5f7f9a 10%,#5f7f9a 50%,#4f6f70 90%)"></div><div style="left:0;top:1px;width:100%;height:2px;background:linear-gradient(90deg,#f0f8e8 10%,#b8d888 50%,#3a9030 90%)"></div><div style="left:0;top:3px;width:100%;height:3px;background:linear-gradient(90deg,#fcfdf8 10%,#d4f0a8 50%,#70c060 90%)"></div><div style="left:0;top:6px;width:100%;height:2px;background:linear-gradient(90deg,#c0cca0 10%,#8ca070 50%,#409838 90%)"></div><div style="left:0;top:8px;width:100%;height:4px;background:linear-gradient(90deg,#80965e 10%,#5a7858 50%,#2a6a28 90%)"></div><svg style="position:absolute;right:0;top:0" width="8" height="12"><polygon points="8,0 2,5 2,9 8,12" fill="rgba(30,10,0,0.4)"/><rect x="7" y="0" width="1" height="12" fill="rgba(0,0,0,0.5)"/></svg><svg style="position:absolute;left:0;top:0" width="6" height="12"><polygon points="0,0 5,6.0 0,12" fill="rgba(230,240,255,0.5)"/></svg></div>
<div class="lb" style="left:520px;top:668px;width:41px;height:13px;">1,09</div>
<div class="lb" style="left:730px;top:668px;width:43px;height:13px;">6,2</div>
<div class="bar" style="left:565px;top:683px;width:163px;height:14px"><div style="left:0;top:0px;width:100%;height:1px;background:linear-gradient(90deg,#7a6a6a 10%,#6a5a5a 50%,#4a3a3a 90%)"></div><div style="left:0;top:1px;width:100%;height:3px;background:linear-gradient(90deg,#f8c090 10%,#f09868 50%,#b86030 90%)"></div><div style="left:0;top:4px;width:100%;height:2px;background:linear-gradient(90deg,#f5ecd0 10%,#f0b080 50%,#d08050 90%)"></div><div style="left:0;top:6px;width:100%;height:3px;background:linear-gradient(90deg,#c8a080 10%,#b07848 50%,#8a4a28 90%)"></div><div style="left:0;top:9px;width:100%;height:2px;background:linear-gradient(90deg,#8a6848 10%,#8a5a38 50%,#5a3018 90%)"></div><div style="left:0;top:11px;width:100%;height:1px;background:linear-gradient(90deg,#6a7a7a 10%,#5a5a5a 50%,#3a3030 90%)"></div><svg style="position:absolute;right:0;top:0" width="8" height="12"><polygon points="8,0 2,5 2,9 8,12" fill="rgba(30,10,0,0.4)"/><rect x="7" y="0" width="1" height="12" fill="rgba(0,0,0,0.5)"/></svg><svg style="position:absolute;left:0;top:0" width="6" height="12"><polygon points="0,0 5,6.0 0,12" fill="rgba(230,240,255,0.5)"/></svg></div>
<div class="lb" style="left:522px;top:685px;width:41px;height:13px;">1,17</div>
<div class="lb" style="left:730px;top:685px;width:43px;height:13px;">6,2</div>
<div class="bar" style="left:596px;top:700px;width:389px;height:14px"><div style="left:0;top:0px;width:100%;height:1px;background:linear-gradient(90deg,#5f7f9a 10%,#5f7f9a 50%,#4f6f70 90%)"></div><div style="left:0;top:1px;width:100%;height:2px;background:linear-gradient(90deg,#f0f8e8 10%,#b8d888 50%,#3a9030 90%)"></div><div style="left:0;top:3px;width:100%;height:3px;background:linear-gradient(90deg,#fcfdf8 10%,#d4f0a8 50%,#70c060 90%)"></div><div style="left:0;top:6px;width:100%;height:2px;background:linear-gradient(90deg,#c0cca0 10%,#8ca070 50%,#409838 90%)"></div><div style="left:0;top:8px;width:100%;height:4px;background:linear-gradient(90deg,#80965e 10%,#5a7858 50%,#2a6a28 90%)"></div><svg style="position:absolute;right:0;top:0" width="8" height="12"><polygon points="8,0 2,5 2,9 8,12" fill="rgba(30,10,0,0.4)"/><rect x="7" y="0" width="1" height="12" fill="rgba(0,0,0,0.5)"/></svg><svg style="position:absolute;left:0;top:0" width="6" height="12"><polygon points="0,0 5,6.0 0,12" fill="rgba(230,240,255,0.5)"/></svg></div>
<div class="lb" style="left:553px;top:702px;width:41px;height:13px;">2,12</div>
<div class="lb" style="left:987px;top:702px;width:43px;height:13px;">38</div>
<div class="bar" style="left:691px;top:717px;width:184px;height:14px"><div style="left:0;top:0px;width:100%;height:1px;background:linear-gradient(90deg,#7a6a6a 10%,#6a5a5a 50%,#4a3a3a 90%)"></div><div style="left:0;top:1px;width:100%;height:3px;background:linear-gradient(90deg,#f8c090 10%,#f09868 50%,#b86030 90%)"></div><div style="left:0;top:4px;width:100%;height:2px;background:linear-gradient(90deg,#f5ecd0 10%,#f0b080 50%,#d08050 90%)"></div><div style="left:0;top:6px;width:100%;height:3px;background:linear-gradient(90deg,#c8a080 10%,#b07848 50%,#8a4a28 90%)"></div><div style="left:0;top:9px;width:100%;height:2px;background:linear-gradient(90deg,#8a6848 10%,#8a5a38 50%,#5a3018 90%)"></div><div style="left:0;top:11px;width:100%;height:1px;background:linear-gradient(90deg,#6a7a7a 10%,#5a5a5a 50%,#3a3030 90%)"></div><svg style="position:absolute;right:0;top:0" width="8" height="12"><polygon points="8,0 2,5 2,9 8,12" fill="rgba(30,10,0,0.4)"/><rect x="7" y="0" width="1" height="12" fill="rgba(0,0,0,0.5)"/></svg><svg style="position:absolute;left:0;top:0" width="6" height="12"><polygon points="0,0 5,6.0 0,12" fill="rgba(230,240,255,0.5)"/></svg></div>
<div class="lb" style="left:649px;top:719px;width:41px;height:13px;">5,13</div>
<div class="lb" style="left:877px;top:719px;width:43px;height:13px;">14</div>
<div class="bar" style="left:537px;top:734px;width:7px;height:14px"><div style="left:0;top:0px;width:100%;height:1px;background:linear-gradient(90deg,#5f7f9a 10%,#5f7f9a 50%,#4f6f70 90%)"></div><div style="left:0;top:1px;width:100%;height:2px;background:linear-gradient(90deg,#f0f8e8 10%,#b8d888 50%,#3a9030 90%)"></div><div style="left:0;top:3px;width:100%;height:3px;background:linear-gradient(90deg,#fcfdf8 10%,#d4f0a8 50%,#70c060 90%)"></div><div style="left:0;top:6px;width:100%;height:2px;background:linear-gradient(90deg,#c0cca0 10%,#8ca070 50%,#409838 90%)"></div><div style="left:0;top:8px;width:100%;height:4px;background:linear-gradient(90deg,#80965e 10%,#5a7858 50%,#2a6a28 90%)"></div><div style="right:0;top:0;width:1px;height:100%;background:rgba(0,0,0,.7)"></div></div>
<div class="lb" style="left:494px;top:736px;width:41px;height:13px;">0,29</div>
<div class="lb" style="left:546px;top:736px;width:43px;height:13px;">0,45</div>
<div class="bar" style="left:537px;top:751px;width:7px;height:14px"><div style="left:0;top:0px;width:100%;height:1px;background:linear-gradient(90deg,#7a6a6a 10%,#6a5a5a 50%,#4a3a3a 90%)"></div><div style="left:0;top:1px;width:100%;height:3px;background:linear-gradient(90deg,#f8c090 10%,#f09868 50%,#b86030 90%)"></div><div style="left:0;top:4px;width:100%;height:2px;background:linear-gradient(90deg,#f5ecd0 10%,#f0b080 50%,#d08050 90%)"></div><div style="left:0;top:6px;width:100%;height:3px;background:linear-gradient(90deg,#c8a080 10%,#b07848 50%,#8a4a28 90%)"></div><div style="left:0;top:9px;width:100%;height:2px;background:linear-gradient(90deg,#8a6848 10%,#8a5a38 50%,#5a3018 90%)"></div><div style="left:0;top:11px;width:100%;height:1px;background:linear-gradient(90deg,#6a7a7a 10%,#5a5a5a 50%,#3a3030 90%)"></div><div style="right:0;top:0;width:1px;height:100%;background:rgba(0,0,0,.7)"></div></div>
<div class="lb" style="left:494px;top:753px;width:41px;height:13px;">0,29</div>
<div class="lb" style="left:546px;top:753px;width:43px;height:13px;">0,45</div>
</body></html>
